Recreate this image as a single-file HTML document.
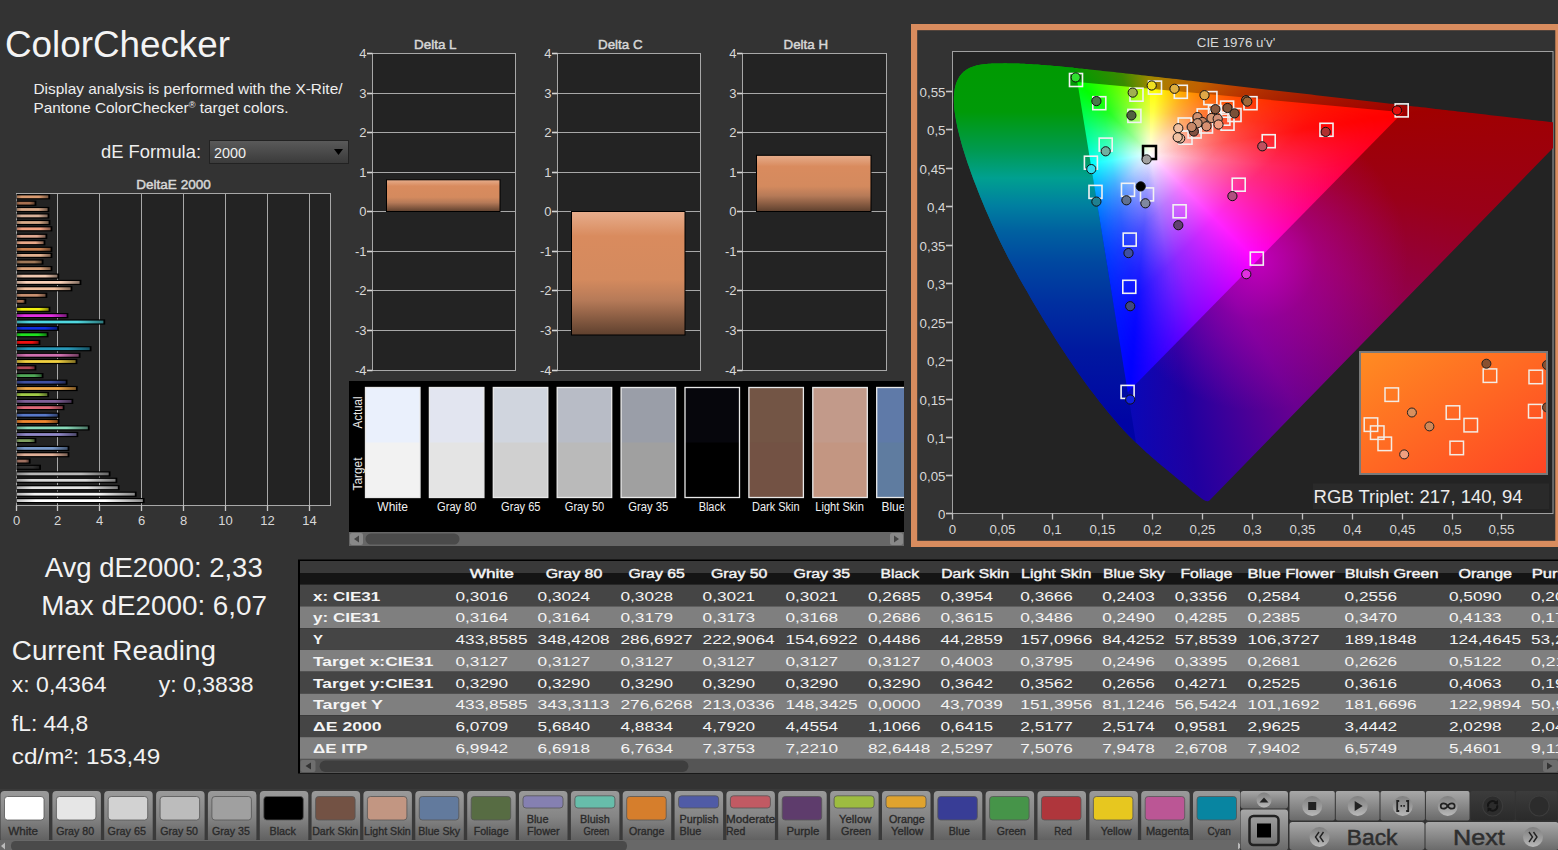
<!DOCTYPE html><html><head><meta charset="utf-8"><style>html,body{margin:0;padding:0;background:#333;}body{width:1558px;height:850px;overflow:hidden;position:relative;font-family:'Liberation Sans',sans-serif}</style></head><body><svg width="1558" height="850" viewBox="0 0 1558 850" style="position:absolute;left:0;top:0;font-family:'Liberation Sans',sans-serif">
<defs>
<linearGradient id="dd" x1="0" y1="0" x2="0" y2="1"><stop offset="0" stop-color="#5a5a5a"/><stop offset="1" stop-color="#3a3a3a"/></linearGradient>
<linearGradient id="dbar" x1="0" y1="0" x2="0" y2="1"><stop offset="0" stop-color="#e6ad8c"/><stop offset="0.2" stop-color="#d98b5e"/><stop offset="0.55" stop-color="#d48a5e"/><stop offset="0.72" stop-color="#b67a58"/><stop offset="1" stop-color="#5e402e"/></linearGradient>
</defs>
<rect x="0" y="0" width="1558" height="850" fill="#333333"/>
<text x="5" y="57" font-size="37" fill="#f4f4f4" font-weight="400" text-anchor="start" textLength="225" lengthAdjust="spacingAndGlyphs" >ColorChecker</text>
<text x="33.5" y="93.6" font-size="15" fill="#eeeeee" font-weight="400" text-anchor="start" textLength="309" lengthAdjust="spacingAndGlyphs" >Display analysis is performed with the X-Rite/</text>
<text x="33.5" y="113.2" font-size="15" fill="#eeeeee" font-weight="400" text-anchor="start" textLength="255" lengthAdjust="spacingAndGlyphs" >Pantone ColorChecker<tspan font-size="9" dy="-5">®</tspan><tspan dy="5"> target colors.</tspan></text>
<text x="101" y="158.4" font-size="18.4" fill="#eeeeee" font-weight="400" text-anchor="start" textLength="100" lengthAdjust="spacingAndGlyphs" >dE Formula:</text>
<rect x="209.5" y="140.5" width="139" height="23" fill="url(#dd)" stroke="#222" stroke-width="1"/>
<text x="214" y="158" font-size="15" fill="#f0f0f0" font-weight="400" text-anchor="start" textLength="32" lengthAdjust="spacingAndGlyphs" >2000</text>
<path d="M334 149 L343 149 L338.5 155 Z" fill="#000"/>
<text x="173.5" y="189" font-size="13" fill="#d8d8d8" font-weight="400" text-anchor="middle" textLength="74.5" lengthAdjust="spacingAndGlyphs" stroke="#d8d8d8" stroke-width="0.45">DeltaE 2000</text>
<rect x="16.5" y="193.5" width="314" height="312" fill="#232323" stroke="#a8a8a8" stroke-width="1"/>
<line x1="57.5" y1="193.5" x2="57.5" y2="505.5" stroke="#a8a8a8" stroke-width="1"/>
<line x1="99.5" y1="193.5" x2="99.5" y2="505.5" stroke="#a8a8a8" stroke-width="1"/>
<line x1="141.5" y1="193.5" x2="141.5" y2="505.5" stroke="#a8a8a8" stroke-width="1"/>
<line x1="183.5" y1="193.5" x2="183.5" y2="505.5" stroke="#a8a8a8" stroke-width="1"/>
<line x1="225.5" y1="193.5" x2="225.5" y2="505.5" stroke="#a8a8a8" stroke-width="1"/>
<line x1="267.5" y1="193.5" x2="267.5" y2="505.5" stroke="#a8a8a8" stroke-width="1"/>
<line x1="309.5" y1="193.5" x2="309.5" y2="505.5" stroke="#a8a8a8" stroke-width="1"/>
<line x1="16.5" y1="505.5" x2="16.5" y2="511" stroke="#c8c8c8" stroke-width="1.3"/>
<text x="16.5" y="525.3" font-size="13" fill="#d8d8d8" font-weight="400" text-anchor="middle" >0</text>
<line x1="57.5" y1="505.5" x2="57.5" y2="511" stroke="#c8c8c8" stroke-width="1.3"/>
<text x="57.5" y="525.3" font-size="13" fill="#d8d8d8" font-weight="400" text-anchor="middle" >2</text>
<line x1="99.5" y1="505.5" x2="99.5" y2="511" stroke="#c8c8c8" stroke-width="1.3"/>
<text x="99.5" y="525.3" font-size="13" fill="#d8d8d8" font-weight="400" text-anchor="middle" >4</text>
<line x1="141.5" y1="505.5" x2="141.5" y2="511" stroke="#c8c8c8" stroke-width="1.3"/>
<text x="141.5" y="525.3" font-size="13" fill="#d8d8d8" font-weight="400" text-anchor="middle" >6</text>
<line x1="183.5" y1="505.5" x2="183.5" y2="511" stroke="#c8c8c8" stroke-width="1.3"/>
<text x="183.5" y="525.3" font-size="13" fill="#d8d8d8" font-weight="400" text-anchor="middle" >8</text>
<line x1="225.5" y1="505.5" x2="225.5" y2="511" stroke="#c8c8c8" stroke-width="1.3"/>
<text x="225.5" y="525.3" font-size="13" fill="#d8d8d8" font-weight="400" text-anchor="middle" >10</text>
<line x1="267.5" y1="505.5" x2="267.5" y2="511" stroke="#c8c8c8" stroke-width="1.3"/>
<text x="267.5" y="525.3" font-size="13" fill="#d8d8d8" font-weight="400" text-anchor="middle" >12</text>
<line x1="309.5" y1="505.5" x2="309.5" y2="511" stroke="#c8c8c8" stroke-width="1.3"/>
<text x="309.5" y="525.3" font-size="13" fill="#d8d8d8" font-weight="400" text-anchor="middle" >14</text>
<defs><linearGradient id="b0" x1="0" y1="0" x2="1" y2="0"><stop offset="0" stop-color="#d89a70" stop-opacity="0.75"/><stop offset="0.15" stop-color="#d89a70"/><stop offset="0.7" stop-color="#d89a70"/><stop offset="1" stop-color="#d89a70" stop-opacity="0.55"/></linearGradient><linearGradient id="b1" x1="0" y1="0" x2="1" y2="0"><stop offset="0" stop-color="#a87050" stop-opacity="0.75"/><stop offset="0.15" stop-color="#a87050"/><stop offset="0.7" stop-color="#a87050"/><stop offset="1" stop-color="#a87050" stop-opacity="0.55"/></linearGradient><linearGradient id="b2" x1="0" y1="0" x2="1" y2="0"><stop offset="0" stop-color="#d8a888" stop-opacity="0.75"/><stop offset="0.15" stop-color="#d8a888"/><stop offset="0.7" stop-color="#d8a888"/><stop offset="1" stop-color="#d8a888" stop-opacity="0.55"/></linearGradient><linearGradient id="b3" x1="0" y1="0" x2="1" y2="0"><stop offset="0" stop-color="#d8b098" stop-opacity="0.75"/><stop offset="0.15" stop-color="#d8b098"/><stop offset="0.7" stop-color="#d8b098"/><stop offset="1" stop-color="#d8b098" stop-opacity="0.55"/></linearGradient><linearGradient id="b4" x1="0" y1="0" x2="1" y2="0"><stop offset="0" stop-color="#d8aa88" stop-opacity="0.75"/><stop offset="0.15" stop-color="#d8aa88"/><stop offset="0.7" stop-color="#d8aa88"/><stop offset="1" stop-color="#d8aa88" stop-opacity="0.55"/></linearGradient><linearGradient id="b5" x1="0" y1="0" x2="1" y2="0"><stop offset="0" stop-color="#f0a080" stop-opacity="0.75"/><stop offset="0.15" stop-color="#f0a080"/><stop offset="0.7" stop-color="#f0a080"/><stop offset="1" stop-color="#f0a080" stop-opacity="0.55"/></linearGradient><linearGradient id="b6" x1="0" y1="0" x2="1" y2="0"><stop offset="0" stop-color="#e0a890" stop-opacity="0.75"/><stop offset="0.15" stop-color="#e0a890"/><stop offset="0.7" stop-color="#e0a890"/><stop offset="1" stop-color="#e0a890" stop-opacity="0.55"/></linearGradient><linearGradient id="b7" x1="0" y1="0" x2="1" y2="0"><stop offset="0" stop-color="#e8a888" stop-opacity="0.75"/><stop offset="0.15" stop-color="#e8a888"/><stop offset="0.7" stop-color="#e8a888"/><stop offset="1" stop-color="#e8a888" stop-opacity="0.55"/></linearGradient><linearGradient id="b8" x1="0" y1="0" x2="1" y2="0"><stop offset="0" stop-color="#c88050" stop-opacity="0.75"/><stop offset="0.15" stop-color="#c88050"/><stop offset="0.7" stop-color="#c88050"/><stop offset="1" stop-color="#c88050" stop-opacity="0.55"/></linearGradient><linearGradient id="b9" x1="0" y1="0" x2="1" y2="0"><stop offset="0" stop-color="#e0b090" stop-opacity="0.75"/><stop offset="0.15" stop-color="#e0b090"/><stop offset="0.7" stop-color="#e0b090"/><stop offset="1" stop-color="#e0b090" stop-opacity="0.55"/></linearGradient><linearGradient id="b10" x1="0" y1="0" x2="1" y2="0"><stop offset="0" stop-color="#a07858" stop-opacity="0.75"/><stop offset="0.15" stop-color="#a07858"/><stop offset="0.7" stop-color="#a07858"/><stop offset="1" stop-color="#a07858" stop-opacity="0.55"/></linearGradient><linearGradient id="b11" x1="0" y1="0" x2="1" y2="0"><stop offset="0" stop-color="#d8a078" stop-opacity="0.75"/><stop offset="0.15" stop-color="#d8a078"/><stop offset="0.7" stop-color="#d8a078"/><stop offset="1" stop-color="#d8a078" stop-opacity="0.55"/></linearGradient><linearGradient id="b12" x1="0" y1="0" x2="1" y2="0"><stop offset="0" stop-color="#f0c8b0" stop-opacity="0.75"/><stop offset="0.15" stop-color="#f0c8b0"/><stop offset="0.7" stop-color="#f0c8b0"/><stop offset="1" stop-color="#f0c8b0" stop-opacity="0.55"/></linearGradient><linearGradient id="b13" x1="0" y1="0" x2="1" y2="0"><stop offset="0" stop-color="#f8d0b8" stop-opacity="0.75"/><stop offset="0.15" stop-color="#f8d0b8"/><stop offset="0.7" stop-color="#f8d0b8"/><stop offset="1" stop-color="#f8d0b8" stop-opacity="0.55"/></linearGradient><linearGradient id="b14" x1="0" y1="0" x2="1" y2="0"><stop offset="0" stop-color="#f0c0a0" stop-opacity="0.75"/><stop offset="0.15" stop-color="#f0c0a0"/><stop offset="0.7" stop-color="#f0c0a0"/><stop offset="1" stop-color="#f0c0a0" stop-opacity="0.55"/></linearGradient><linearGradient id="b15" x1="0" y1="0" x2="1" y2="0"><stop offset="0" stop-color="#c89070" stop-opacity="0.75"/><stop offset="0.15" stop-color="#c89070"/><stop offset="0.7" stop-color="#c89070"/><stop offset="1" stop-color="#c89070" stop-opacity="0.55"/></linearGradient><linearGradient id="b16" x1="0" y1="0" x2="1" y2="0"><stop offset="0" stop-color="#a87050" stop-opacity="0.75"/><stop offset="0.15" stop-color="#a87050"/><stop offset="0.7" stop-color="#a87050"/><stop offset="1" stop-color="#a87050" stop-opacity="0.55"/></linearGradient><linearGradient id="b17" x1="0" y1="0" x2="1" y2="0"><stop offset="0" stop-color="#f0f010" stop-opacity="0.75"/><stop offset="0.15" stop-color="#f0f010"/><stop offset="0.7" stop-color="#f0f010"/><stop offset="1" stop-color="#f0f010" stop-opacity="0.55"/></linearGradient><linearGradient id="b18" x1="0" y1="0" x2="1" y2="0"><stop offset="0" stop-color="#e030e0" stop-opacity="0.75"/><stop offset="0.15" stop-color="#e030e0"/><stop offset="0.7" stop-color="#e030e0"/><stop offset="1" stop-color="#e030e0" stop-opacity="0.55"/></linearGradient><linearGradient id="b19" x1="0" y1="0" x2="1" y2="0"><stop offset="0" stop-color="#50d8e0" stop-opacity="0.75"/><stop offset="0.15" stop-color="#50d8e0"/><stop offset="0.7" stop-color="#50d8e0"/><stop offset="1" stop-color="#50d8e0" stop-opacity="0.55"/></linearGradient><linearGradient id="b20" x1="0" y1="0" x2="1" y2="0"><stop offset="0" stop-color="#1030e0" stop-opacity="0.75"/><stop offset="0.15" stop-color="#1030e0"/><stop offset="0.7" stop-color="#1030e0"/><stop offset="1" stop-color="#1030e0" stop-opacity="0.55"/></linearGradient><linearGradient id="b21" x1="0" y1="0" x2="1" y2="0"><stop offset="0" stop-color="#20e020" stop-opacity="0.75"/><stop offset="0.15" stop-color="#20e020"/><stop offset="0.7" stop-color="#20e020"/><stop offset="1" stop-color="#20e020" stop-opacity="0.55"/></linearGradient><linearGradient id="b22" x1="0" y1="0" x2="1" y2="0"><stop offset="0" stop-color="#f01010" stop-opacity="0.75"/><stop offset="0.15" stop-color="#f01010"/><stop offset="0.7" stop-color="#f01010"/><stop offset="1" stop-color="#f01010" stop-opacity="0.55"/></linearGradient><linearGradient id="b23" x1="0" y1="0" x2="1" y2="0"><stop offset="0" stop-color="#2898b8" stop-opacity="0.75"/><stop offset="0.15" stop-color="#2898b8"/><stop offset="0.7" stop-color="#2898b8"/><stop offset="1" stop-color="#2898b8" stop-opacity="0.55"/></linearGradient><linearGradient id="b24" x1="0" y1="0" x2="1" y2="0"><stop offset="0" stop-color="#d070b0" stop-opacity="0.75"/><stop offset="0.15" stop-color="#d070b0"/><stop offset="0.7" stop-color="#d070b0"/><stop offset="1" stop-color="#d070b0" stop-opacity="0.55"/></linearGradient><linearGradient id="b25" x1="0" y1="0" x2="1" y2="0"><stop offset="0" stop-color="#f0d040" stop-opacity="0.75"/><stop offset="0.15" stop-color="#f0d040"/><stop offset="0.7" stop-color="#f0d040"/><stop offset="1" stop-color="#f0d040" stop-opacity="0.55"/></linearGradient><linearGradient id="b26" x1="0" y1="0" x2="1" y2="0"><stop offset="0" stop-color="#b04858" stop-opacity="0.75"/><stop offset="0.15" stop-color="#b04858"/><stop offset="0.7" stop-color="#b04858"/><stop offset="1" stop-color="#b04858" stop-opacity="0.55"/></linearGradient><linearGradient id="b27" x1="0" y1="0" x2="1" y2="0"><stop offset="0" stop-color="#50a858" stop-opacity="0.75"/><stop offset="0.15" stop-color="#50a858"/><stop offset="0.7" stop-color="#50a858"/><stop offset="1" stop-color="#50a858" stop-opacity="0.55"/></linearGradient><linearGradient id="b28" x1="0" y1="0" x2="1" y2="0"><stop offset="0" stop-color="#4050a0" stop-opacity="0.75"/><stop offset="0.15" stop-color="#4050a0"/><stop offset="0.7" stop-color="#4050a0"/><stop offset="1" stop-color="#4050a0" stop-opacity="0.55"/></linearGradient><linearGradient id="b29" x1="0" y1="0" x2="1" y2="0"><stop offset="0" stop-color="#f0a848" stop-opacity="0.75"/><stop offset="0.15" stop-color="#f0a848"/><stop offset="0.7" stop-color="#f0a848"/><stop offset="1" stop-color="#f0a848" stop-opacity="0.55"/></linearGradient><linearGradient id="b30" x1="0" y1="0" x2="1" y2="0"><stop offset="0" stop-color="#a0c848" stop-opacity="0.75"/><stop offset="0.15" stop-color="#a0c848"/><stop offset="0.7" stop-color="#a0c848"/><stop offset="1" stop-color="#a0c848" stop-opacity="0.55"/></linearGradient><linearGradient id="b31" x1="0" y1="0" x2="1" y2="0"><stop offset="0" stop-color="#806098" stop-opacity="0.75"/><stop offset="0.15" stop-color="#806098"/><stop offset="0.7" stop-color="#806098"/><stop offset="1" stop-color="#806098" stop-opacity="0.55"/></linearGradient><linearGradient id="b32" x1="0" y1="0" x2="1" y2="0"><stop offset="0" stop-color="#e06878" stop-opacity="0.75"/><stop offset="0.15" stop-color="#e06878"/><stop offset="0.7" stop-color="#e06878"/><stop offset="1" stop-color="#e06878" stop-opacity="0.55"/></linearGradient><linearGradient id="b33" x1="0" y1="0" x2="1" y2="0"><stop offset="0" stop-color="#5878c8" stop-opacity="0.75"/><stop offset="0.15" stop-color="#5878c8"/><stop offset="0.7" stop-color="#5878c8"/><stop offset="1" stop-color="#5878c8" stop-opacity="0.55"/></linearGradient><linearGradient id="b34" x1="0" y1="0" x2="1" y2="0"><stop offset="0" stop-color="#f08830" stop-opacity="0.75"/><stop offset="0.15" stop-color="#f08830"/><stop offset="0.7" stop-color="#f08830"/><stop offset="1" stop-color="#f08830" stop-opacity="0.55"/></linearGradient><linearGradient id="b35" x1="0" y1="0" x2="1" y2="0"><stop offset="0" stop-color="#88d8b8" stop-opacity="0.75"/><stop offset="0.15" stop-color="#88d8b8"/><stop offset="0.7" stop-color="#88d8b8"/><stop offset="1" stop-color="#88d8b8" stop-opacity="0.55"/></linearGradient><linearGradient id="b36" x1="0" y1="0" x2="1" y2="0"><stop offset="0" stop-color="#9088c8" stop-opacity="0.75"/><stop offset="0.15" stop-color="#9088c8"/><stop offset="0.7" stop-color="#9088c8"/><stop offset="1" stop-color="#9088c8" stop-opacity="0.55"/></linearGradient><linearGradient id="b37" x1="0" y1="0" x2="1" y2="0"><stop offset="0" stop-color="#80a060" stop-opacity="0.75"/><stop offset="0.15" stop-color="#80a060"/><stop offset="0.7" stop-color="#80a060"/><stop offset="1" stop-color="#80a060" stop-opacity="0.55"/></linearGradient><linearGradient id="b38" x1="0" y1="0" x2="1" y2="0"><stop offset="0" stop-color="#7898c8" stop-opacity="0.75"/><stop offset="0.15" stop-color="#7898c8"/><stop offset="0.7" stop-color="#7898c8"/><stop offset="1" stop-color="#7898c8" stop-opacity="0.55"/></linearGradient><linearGradient id="b39" x1="0" y1="0" x2="1" y2="0"><stop offset="0" stop-color="#e0b098" stop-opacity="0.75"/><stop offset="0.15" stop-color="#e0b098"/><stop offset="0.7" stop-color="#e0b098"/><stop offset="1" stop-color="#e0b098" stop-opacity="0.55"/></linearGradient><linearGradient id="b40" x1="0" y1="0" x2="1" y2="0"><stop offset="0" stop-color="#a07060" stop-opacity="0.75"/><stop offset="0.15" stop-color="#a07060"/><stop offset="0.7" stop-color="#a07060"/><stop offset="1" stop-color="#a07060" stop-opacity="0.55"/></linearGradient><linearGradient id="b41" x1="0" y1="0" x2="1" y2="0"><stop offset="0" stop-color="#303030" stop-opacity="0.75"/><stop offset="0.15" stop-color="#303030"/><stop offset="0.7" stop-color="#303030"/><stop offset="1" stop-color="#303030" stop-opacity="0.55"/></linearGradient><linearGradient id="b42" x1="0" y1="0" x2="1" y2="0"><stop offset="0" stop-color="#b8b8b8" stop-opacity="0.75"/><stop offset="0.15" stop-color="#b8b8b8"/><stop offset="0.7" stop-color="#b8b8b8"/><stop offset="1" stop-color="#b8b8b8" stop-opacity="0.55"/></linearGradient><linearGradient id="b43" x1="0" y1="0" x2="1" y2="0"><stop offset="0" stop-color="#d8d8d8" stop-opacity="0.75"/><stop offset="0.15" stop-color="#d8d8d8"/><stop offset="0.7" stop-color="#d8d8d8"/><stop offset="1" stop-color="#d8d8d8" stop-opacity="0.55"/></linearGradient><linearGradient id="b44" x1="0" y1="0" x2="1" y2="0"><stop offset="0" stop-color="#e4e4e4" stop-opacity="0.75"/><stop offset="0.15" stop-color="#e4e4e4"/><stop offset="0.7" stop-color="#e4e4e4"/><stop offset="1" stop-color="#e4e4e4" stop-opacity="0.55"/></linearGradient><linearGradient id="b45" x1="0" y1="0" x2="1" y2="0"><stop offset="0" stop-color="#f4f4f4" stop-opacity="0.75"/><stop offset="0.15" stop-color="#f4f4f4"/><stop offset="0.7" stop-color="#f4f4f4"/><stop offset="1" stop-color="#f4f4f4" stop-opacity="0.55"/></linearGradient><linearGradient id="b46" x1="0" y1="0" x2="1" y2="0"><stop offset="0" stop-color="#ffffff" stop-opacity="0.75"/><stop offset="0.15" stop-color="#ffffff"/><stop offset="0.7" stop-color="#ffffff"/><stop offset="1" stop-color="#ffffff" stop-opacity="0.55"/></linearGradient></defs>
<rect x="16.5" y="194.2" width="33.6" height="5.2" fill="#000"/>
<rect x="17" y="195.4" width="31.3" height="2.8" fill="url(#b0)"/>
<rect x="16.5" y="200.6" width="19.9" height="5.2" fill="#000"/>
<rect x="17" y="201.8" width="17.6" height="2.8" fill="url(#b1)"/>
<rect x="16.5" y="206.9" width="32.9" height="5.2" fill="#000"/>
<rect x="17" y="208.1" width="30.6" height="2.8" fill="url(#b2)"/>
<rect x="16.5" y="213.3" width="32.9" height="5.2" fill="#000"/>
<rect x="17" y="214.5" width="30.6" height="2.8" fill="url(#b3)"/>
<rect x="16.5" y="219.9" width="33.9" height="5.2" fill="#000"/>
<rect x="17" y="221.1" width="31.6" height="2.8" fill="url(#b4)"/>
<rect x="16.5" y="226.2" width="35.9" height="5.2" fill="#000"/>
<rect x="17" y="227.4" width="33.6" height="2.8" fill="url(#b5)"/>
<rect x="16.5" y="233.7" width="30.8" height="5.2" fill="#000"/>
<rect x="17" y="234.9" width="28.5" height="2.8" fill="url(#b6)"/>
<rect x="16.5" y="240.1" width="28.9" height="5.2" fill="#000"/>
<rect x="17" y="241.3" width="26.6" height="2.8" fill="url(#b7)"/>
<rect x="16.5" y="246.7" width="35.9" height="5.2" fill="#000"/>
<rect x="17" y="247.9" width="33.6" height="2.8" fill="url(#b8)"/>
<rect x="16.5" y="252.8" width="35.9" height="5.2" fill="#000"/>
<rect x="17" y="254.0" width="33.6" height="2.8" fill="url(#b9)"/>
<rect x="16.5" y="259.4" width="27.0" height="5.2" fill="#000"/>
<rect x="17" y="260.6" width="24.7" height="2.8" fill="url(#b10)"/>
<rect x="16.5" y="266.0" width="35.9" height="5.2" fill="#000"/>
<rect x="17" y="267.2" width="33.6" height="2.8" fill="url(#b11)"/>
<rect x="16.5" y="273.5" width="42.7" height="5.2" fill="#000"/>
<rect x="17" y="274.7" width="40.4" height="2.8" fill="url(#b12)"/>
<rect x="16.5" y="279.8" width="64.9" height="5.2" fill="#000"/>
<rect x="17" y="281.0" width="62.6" height="2.8" fill="url(#b13)"/>
<rect x="16.5" y="286.1" width="55.9" height="5.2" fill="#000"/>
<rect x="17" y="287.3" width="53.6" height="2.8" fill="url(#b14)"/>
<rect x="16.5" y="292.7" width="30.8" height="5.2" fill="#000"/>
<rect x="17" y="293.9" width="28.5" height="2.8" fill="url(#b15)"/>
<rect x="16.5" y="298.7" width="9.8" height="5.2" fill="#000"/>
<rect x="17" y="299.9" width="7.5" height="2.8" fill="url(#b16)"/>
<rect x="16.5" y="306.7" width="33.9" height="5.2" fill="#000"/>
<rect x="17" y="307.9" width="31.6" height="2.8" fill="url(#b17)"/>
<rect x="16.5" y="313.0" width="51.9" height="5.2" fill="#000"/>
<rect x="17" y="314.2" width="49.6" height="2.8" fill="url(#b18)"/>
<rect x="16.5" y="319.4" width="88.7" height="5.2" fill="#000"/>
<rect x="17" y="320.6" width="86.4" height="2.8" fill="url(#b19)"/>
<rect x="16.5" y="325.7" width="42.5" height="5.2" fill="#000"/>
<rect x="17" y="326.9" width="40.2" height="2.8" fill="url(#b20)"/>
<rect x="16.5" y="332.1" width="32.0" height="5.2" fill="#000"/>
<rect x="17" y="333.3" width="29.7" height="2.8" fill="url(#b21)"/>
<rect x="16.5" y="339.8" width="23.9" height="5.2" fill="#000"/>
<rect x="17" y="341.0" width="21.6" height="2.8" fill="url(#b22)"/>
<rect x="16.5" y="346.1" width="75.0" height="5.2" fill="#000"/>
<rect x="17" y="347.3" width="72.7" height="2.8" fill="url(#b23)"/>
<rect x="16.5" y="352.7" width="64.0" height="5.2" fill="#000"/>
<rect x="17" y="353.9" width="61.7" height="2.8" fill="url(#b24)"/>
<rect x="16.5" y="358.9" width="60.9" height="5.2" fill="#000"/>
<rect x="17" y="360.1" width="58.6" height="2.8" fill="url(#b25)"/>
<rect x="16.5" y="365.2" width="19.9" height="5.2" fill="#000"/>
<rect x="17" y="366.4" width="17.6" height="2.8" fill="url(#b26)"/>
<rect x="16.5" y="373.0" width="27.0" height="5.2" fill="#000"/>
<rect x="17" y="374.2" width="24.7" height="2.8" fill="url(#b27)"/>
<rect x="16.5" y="379.6" width="51.0" height="5.2" fill="#000"/>
<rect x="17" y="380.8" width="48.7" height="2.8" fill="url(#b28)"/>
<rect x="16.5" y="385.9" width="61.2" height="5.2" fill="#000"/>
<rect x="17" y="387.1" width="58.9" height="2.8" fill="url(#b29)"/>
<rect x="16.5" y="392.0" width="32.6" height="5.2" fill="#000"/>
<rect x="17" y="393.2" width="30.3" height="2.8" fill="url(#b30)"/>
<rect x="16.5" y="398.8" width="56.8" height="5.2" fill="#000"/>
<rect x="17" y="400.0" width="54.5" height="2.8" fill="url(#b31)"/>
<rect x="16.5" y="405.0" width="48.0" height="5.2" fill="#000"/>
<rect x="17" y="406.2" width="45.7" height="2.8" fill="url(#b32)"/>
<rect x="16.5" y="412.6" width="43.0" height="5.2" fill="#000"/>
<rect x="17" y="413.8" width="40.7" height="2.8" fill="url(#b33)"/>
<rect x="16.5" y="418.9" width="43.0" height="5.2" fill="#000"/>
<rect x="17" y="420.1" width="40.7" height="2.8" fill="url(#b34)"/>
<rect x="16.5" y="425.3" width="73.1" height="5.2" fill="#000"/>
<rect x="17" y="426.5" width="70.8" height="2.8" fill="url(#b35)"/>
<rect x="16.5" y="431.9" width="61.8" height="5.2" fill="#000"/>
<rect x="17" y="433.1" width="59.5" height="2.8" fill="url(#b36)"/>
<rect x="16.5" y="438.0" width="19.9" height="5.2" fill="#000"/>
<rect x="17" y="439.2" width="17.6" height="2.8" fill="url(#b37)"/>
<rect x="16.5" y="445.8" width="52.9" height="5.2" fill="#000"/>
<rect x="17" y="447.0" width="50.6" height="2.8" fill="url(#b38)"/>
<rect x="16.5" y="452.1" width="52.9" height="5.2" fill="#000"/>
<rect x="17" y="453.3" width="50.6" height="2.8" fill="url(#b39)"/>
<rect x="16.5" y="458.5" width="14.1" height="5.2" fill="#000"/>
<rect x="17" y="459.7" width="11.8" height="2.8" fill="url(#b40)"/>
<rect x="16.5" y="464.7" width="24.5" height="5.2" fill="#000"/>
<rect x="17" y="465.9" width="22.2" height="2.8" fill="url(#b41)"/>
<rect x="16.5" y="471.3" width="94.0" height="5.2" fill="#000"/>
<rect x="17" y="472.5" width="91.7" height="2.8" fill="url(#b42)"/>
<rect x="16.5" y="477.7" width="100.8" height="5.2" fill="#000"/>
<rect x="17" y="478.9" width="98.5" height="2.8" fill="url(#b43)"/>
<rect x="16.5" y="485.1" width="103.1" height="5.2" fill="#000"/>
<rect x="17" y="486.3" width="100.8" height="2.8" fill="url(#b44)"/>
<rect x="16.5" y="491.6" width="120.1" height="5.2" fill="#000"/>
<rect x="17" y="492.8" width="117.8" height="2.8" fill="url(#b45)"/>
<rect x="16.5" y="498.0" width="128.1" height="5.2" fill="#000"/>
<rect x="17" y="499.2" width="125.8" height="2.8" fill="url(#b46)"/>
<text x="435.3" y="49" font-size="13" fill="#d8d8d8" font-weight="400" text-anchor="middle" textLength="42.6" lengthAdjust="spacingAndGlyphs" stroke="#d8d8d8" stroke-width="0.45">Delta L</text>
<rect x="372.5" y="53.5" width="143.0" height="317" fill="#232323" stroke="#a8a8a8" stroke-width="1"/>
<line x1="372.5" y1="53.5" x2="515.5" y2="53.5" stroke="#a8a8a8" stroke-width="1"/>
<line x1="367.0" y1="53.5" x2="372.5" y2="53.5" stroke="#d8d8d8" stroke-width="1.6"/>
<text x="366.5" y="58.1" font-size="13" fill="#d8d8d8" font-weight="400" text-anchor="end" >4</text>
<line x1="372.5" y1="93.5" x2="515.5" y2="93.5" stroke="#a8a8a8" stroke-width="1"/>
<line x1="367.0" y1="93.5" x2="372.5" y2="93.5" stroke="#d8d8d8" stroke-width="1.6"/>
<text x="366.5" y="98.1" font-size="13" fill="#d8d8d8" font-weight="400" text-anchor="end" >3</text>
<line x1="372.5" y1="132.5" x2="515.5" y2="132.5" stroke="#a8a8a8" stroke-width="1"/>
<line x1="367.0" y1="132.5" x2="372.5" y2="132.5" stroke="#d8d8d8" stroke-width="1.6"/>
<text x="366.5" y="137.1" font-size="13" fill="#d8d8d8" font-weight="400" text-anchor="end" >2</text>
<line x1="372.5" y1="172.5" x2="515.5" y2="172.5" stroke="#a8a8a8" stroke-width="1"/>
<line x1="367.0" y1="172.5" x2="372.5" y2="172.5" stroke="#d8d8d8" stroke-width="1.6"/>
<text x="366.5" y="177.1" font-size="13" fill="#d8d8d8" font-weight="400" text-anchor="end" >1</text>
<line x1="372.5" y1="211.5" x2="515.5" y2="211.5" stroke="#a8a8a8" stroke-width="1"/>
<line x1="367.0" y1="211.5" x2="372.5" y2="211.5" stroke="#d8d8d8" stroke-width="1.6"/>
<text x="366.5" y="216.1" font-size="13" fill="#d8d8d8" font-weight="400" text-anchor="end" >0</text>
<line x1="372.5" y1="251.5" x2="515.5" y2="251.5" stroke="#a8a8a8" stroke-width="1"/>
<line x1="367.0" y1="251.5" x2="372.5" y2="251.5" stroke="#d8d8d8" stroke-width="1.6"/>
<text x="366.5" y="256.1" font-size="13" fill="#d8d8d8" font-weight="400" text-anchor="end" >-1</text>
<line x1="372.5" y1="290.5" x2="515.5" y2="290.5" stroke="#a8a8a8" stroke-width="1"/>
<line x1="367.0" y1="290.5" x2="372.5" y2="290.5" stroke="#d8d8d8" stroke-width="1.6"/>
<text x="366.5" y="295.1" font-size="13" fill="#d8d8d8" font-weight="400" text-anchor="end" >-2</text>
<line x1="372.5" y1="330.5" x2="515.5" y2="330.5" stroke="#a8a8a8" stroke-width="1"/>
<line x1="367.0" y1="330.5" x2="372.5" y2="330.5" stroke="#d8d8d8" stroke-width="1.6"/>
<text x="366.5" y="335.1" font-size="13" fill="#d8d8d8" font-weight="400" text-anchor="end" >-3</text>
<line x1="372.5" y1="370.5" x2="515.5" y2="370.5" stroke="#a8a8a8" stroke-width="1"/>
<line x1="367.0" y1="370.5" x2="372.5" y2="370.5" stroke="#d8d8d8" stroke-width="1.6"/>
<text x="366.5" y="375.1" font-size="13" fill="#d8d8d8" font-weight="400" text-anchor="end" >-4</text>
<rect x="386.5" y="179.8" width="113.5" height="31.7" fill="url(#dbar)" stroke="#000" stroke-width="1"/>
<text x="620.3" y="49" font-size="13" fill="#d8d8d8" font-weight="400" text-anchor="middle" textLength="44.5" lengthAdjust="spacingAndGlyphs" stroke="#d8d8d8" stroke-width="0.45">Delta C</text>
<rect x="557.5" y="53.5" width="143.0" height="317" fill="#232323" stroke="#a8a8a8" stroke-width="1"/>
<line x1="557.5" y1="53.5" x2="700.5" y2="53.5" stroke="#a8a8a8" stroke-width="1"/>
<line x1="552.0" y1="53.5" x2="557.5" y2="53.5" stroke="#d8d8d8" stroke-width="1.6"/>
<text x="551.5" y="58.1" font-size="13" fill="#d8d8d8" font-weight="400" text-anchor="end" >4</text>
<line x1="557.5" y1="93.5" x2="700.5" y2="93.5" stroke="#a8a8a8" stroke-width="1"/>
<line x1="552.0" y1="93.5" x2="557.5" y2="93.5" stroke="#d8d8d8" stroke-width="1.6"/>
<text x="551.5" y="98.1" font-size="13" fill="#d8d8d8" font-weight="400" text-anchor="end" >3</text>
<line x1="557.5" y1="132.5" x2="700.5" y2="132.5" stroke="#a8a8a8" stroke-width="1"/>
<line x1="552.0" y1="132.5" x2="557.5" y2="132.5" stroke="#d8d8d8" stroke-width="1.6"/>
<text x="551.5" y="137.1" font-size="13" fill="#d8d8d8" font-weight="400" text-anchor="end" >2</text>
<line x1="557.5" y1="172.5" x2="700.5" y2="172.5" stroke="#a8a8a8" stroke-width="1"/>
<line x1="552.0" y1="172.5" x2="557.5" y2="172.5" stroke="#d8d8d8" stroke-width="1.6"/>
<text x="551.5" y="177.1" font-size="13" fill="#d8d8d8" font-weight="400" text-anchor="end" >1</text>
<line x1="557.5" y1="211.5" x2="700.5" y2="211.5" stroke="#a8a8a8" stroke-width="1"/>
<line x1="552.0" y1="211.5" x2="557.5" y2="211.5" stroke="#d8d8d8" stroke-width="1.6"/>
<text x="551.5" y="216.1" font-size="13" fill="#d8d8d8" font-weight="400" text-anchor="end" >0</text>
<line x1="557.5" y1="251.5" x2="700.5" y2="251.5" stroke="#a8a8a8" stroke-width="1"/>
<line x1="552.0" y1="251.5" x2="557.5" y2="251.5" stroke="#d8d8d8" stroke-width="1.6"/>
<text x="551.5" y="256.1" font-size="13" fill="#d8d8d8" font-weight="400" text-anchor="end" >-1</text>
<line x1="557.5" y1="290.5" x2="700.5" y2="290.5" stroke="#a8a8a8" stroke-width="1"/>
<line x1="552.0" y1="290.5" x2="557.5" y2="290.5" stroke="#d8d8d8" stroke-width="1.6"/>
<text x="551.5" y="295.1" font-size="13" fill="#d8d8d8" font-weight="400" text-anchor="end" >-2</text>
<line x1="557.5" y1="330.5" x2="700.5" y2="330.5" stroke="#a8a8a8" stroke-width="1"/>
<line x1="552.0" y1="330.5" x2="557.5" y2="330.5" stroke="#d8d8d8" stroke-width="1.6"/>
<text x="551.5" y="335.1" font-size="13" fill="#d8d8d8" font-weight="400" text-anchor="end" >-3</text>
<line x1="557.5" y1="370.5" x2="700.5" y2="370.5" stroke="#a8a8a8" stroke-width="1"/>
<line x1="552.0" y1="370.5" x2="557.5" y2="370.5" stroke="#d8d8d8" stroke-width="1.6"/>
<text x="551.5" y="375.1" font-size="13" fill="#d8d8d8" font-weight="400" text-anchor="end" >-4</text>
<rect x="571.5" y="211.5" width="113.5" height="123.5" fill="url(#dbar)" stroke="#000" stroke-width="1"/>
<text x="805.8" y="49" font-size="13" fill="#d8d8d8" font-weight="400" text-anchor="middle" textLength="44.5" lengthAdjust="spacingAndGlyphs" stroke="#d8d8d8" stroke-width="0.45">Delta H</text>
<rect x="742.5" y="53.5" width="144.0" height="317" fill="#232323" stroke="#a8a8a8" stroke-width="1"/>
<line x1="742.5" y1="53.5" x2="886.5" y2="53.5" stroke="#a8a8a8" stroke-width="1"/>
<line x1="737.0" y1="53.5" x2="742.5" y2="53.5" stroke="#d8d8d8" stroke-width="1.6"/>
<text x="736.5" y="58.1" font-size="13" fill="#d8d8d8" font-weight="400" text-anchor="end" >4</text>
<line x1="742.5" y1="93.5" x2="886.5" y2="93.5" stroke="#a8a8a8" stroke-width="1"/>
<line x1="737.0" y1="93.5" x2="742.5" y2="93.5" stroke="#d8d8d8" stroke-width="1.6"/>
<text x="736.5" y="98.1" font-size="13" fill="#d8d8d8" font-weight="400" text-anchor="end" >3</text>
<line x1="742.5" y1="132.5" x2="886.5" y2="132.5" stroke="#a8a8a8" stroke-width="1"/>
<line x1="737.0" y1="132.5" x2="742.5" y2="132.5" stroke="#d8d8d8" stroke-width="1.6"/>
<text x="736.5" y="137.1" font-size="13" fill="#d8d8d8" font-weight="400" text-anchor="end" >2</text>
<line x1="742.5" y1="172.5" x2="886.5" y2="172.5" stroke="#a8a8a8" stroke-width="1"/>
<line x1="737.0" y1="172.5" x2="742.5" y2="172.5" stroke="#d8d8d8" stroke-width="1.6"/>
<text x="736.5" y="177.1" font-size="13" fill="#d8d8d8" font-weight="400" text-anchor="end" >1</text>
<line x1="742.5" y1="211.5" x2="886.5" y2="211.5" stroke="#a8a8a8" stroke-width="1"/>
<line x1="737.0" y1="211.5" x2="742.5" y2="211.5" stroke="#d8d8d8" stroke-width="1.6"/>
<text x="736.5" y="216.1" font-size="13" fill="#d8d8d8" font-weight="400" text-anchor="end" >0</text>
<line x1="742.5" y1="251.5" x2="886.5" y2="251.5" stroke="#a8a8a8" stroke-width="1"/>
<line x1="737.0" y1="251.5" x2="742.5" y2="251.5" stroke="#d8d8d8" stroke-width="1.6"/>
<text x="736.5" y="256.1" font-size="13" fill="#d8d8d8" font-weight="400" text-anchor="end" >-1</text>
<line x1="742.5" y1="290.5" x2="886.5" y2="290.5" stroke="#a8a8a8" stroke-width="1"/>
<line x1="737.0" y1="290.5" x2="742.5" y2="290.5" stroke="#d8d8d8" stroke-width="1.6"/>
<text x="736.5" y="295.1" font-size="13" fill="#d8d8d8" font-weight="400" text-anchor="end" >-2</text>
<line x1="742.5" y1="330.5" x2="886.5" y2="330.5" stroke="#a8a8a8" stroke-width="1"/>
<line x1="737.0" y1="330.5" x2="742.5" y2="330.5" stroke="#d8d8d8" stroke-width="1.6"/>
<text x="736.5" y="335.1" font-size="13" fill="#d8d8d8" font-weight="400" text-anchor="end" >-3</text>
<line x1="742.5" y1="370.5" x2="886.5" y2="370.5" stroke="#a8a8a8" stroke-width="1"/>
<line x1="737.0" y1="370.5" x2="742.5" y2="370.5" stroke="#d8d8d8" stroke-width="1.6"/>
<text x="736.5" y="375.1" font-size="13" fill="#d8d8d8" font-weight="400" text-anchor="end" >-4</text>
<rect x="756.5" y="155.3" width="114.5" height="56.2" fill="url(#dbar)" stroke="#000" stroke-width="1"/>
<rect x="349" y="381" width="555" height="151" fill="#000"/>
<text x="0" y="0" font-size="12" fill="#e8e8e8" transform="translate(362,428.5) rotate(-90)" textLength="32" lengthAdjust="spacingAndGlyphs">Actual</text>
<text x="0" y="0" font-size="12" fill="#e8e8e8" transform="translate(362,490.5) rotate(-90)" textLength="33" lengthAdjust="spacingAndGlyphs">Target</text>
<svg x="349" y="381" width="555" height="151" overflow="hidden">
<rect x="16.5" y="6.5" width="54.5" height="110" fill="#f2f2f2"/>
<rect x="16.5" y="6.5" width="54.5" height="55" fill="#eaf0fc"/>
<rect x="16.5" y="6.5" width="54.5" height="110" fill="none" stroke="#e8e8e8" stroke-width="1.3"/>
<text x="43.7" y="129.60000000000002" font-size="12" fill="#f0f0f0" text-anchor="middle" textLength="30.7" lengthAdjust="spacingAndGlyphs">White</text>
<rect x="80.4" y="6.5" width="54.5" height="110" fill="#e4e4e4"/>
<rect x="80.4" y="6.5" width="54.5" height="55" fill="#e2e5f0"/>
<rect x="80.4" y="6.5" width="54.5" height="110" fill="none" stroke="#e8e8e8" stroke-width="1.3"/>
<text x="107.8" y="129.60000000000002" font-size="12" fill="#f0f0f0" text-anchor="middle" textLength="39.5" lengthAdjust="spacingAndGlyphs">Gray 80</text>
<rect x="144.3" y="6.5" width="54.5" height="110" fill="#d0d0d0"/>
<rect x="144.3" y="6.5" width="54.5" height="55" fill="#d0d5de"/>
<rect x="144.3" y="6.5" width="54.5" height="110" fill="none" stroke="#e8e8e8" stroke-width="1.3"/>
<text x="171.8" y="129.60000000000002" font-size="12" fill="#f0f0f0" text-anchor="middle" textLength="39.5" lengthAdjust="spacingAndGlyphs">Gray 65</text>
<rect x="208.2" y="6.5" width="54.5" height="110" fill="#bababa"/>
<rect x="208.2" y="6.5" width="54.5" height="55" fill="#b8bcc6"/>
<rect x="208.2" y="6.5" width="54.5" height="110" fill="none" stroke="#e8e8e8" stroke-width="1.3"/>
<text x="235.5" y="129.60000000000002" font-size="12" fill="#f0f0f0" text-anchor="middle" textLength="39.5" lengthAdjust="spacingAndGlyphs">Gray 50</text>
<rect x="272.1" y="6.5" width="54.5" height="110" fill="#a0a0a0"/>
<rect x="272.1" y="6.5" width="54.5" height="55" fill="#9a9ea8"/>
<rect x="272.1" y="6.5" width="54.5" height="110" fill="none" stroke="#e8e8e8" stroke-width="1.3"/>
<text x="299.2" y="129.60000000000002" font-size="12" fill="#f0f0f0" text-anchor="middle" textLength="39.9" lengthAdjust="spacingAndGlyphs">Gray 35</text>
<rect x="336.0" y="6.5" width="54.5" height="110" fill="#000000"/>
<rect x="336.0" y="6.5" width="54.5" height="55" fill="#06060c"/>
<rect x="336.0" y="6.5" width="54.5" height="110" fill="none" stroke="#e8e8e8" stroke-width="1.3"/>
<text x="363.0" y="129.60000000000002" font-size="12" fill="#f0f0f0" text-anchor="middle" textLength="26.7" lengthAdjust="spacingAndGlyphs">Black</text>
<rect x="399.9" y="6.5" width="54.5" height="110" fill="#735244"/>
<rect x="399.9" y="6.5" width="54.5" height="55" fill="#735545"/>
<rect x="399.9" y="6.5" width="54.5" height="110" fill="none" stroke="#e8e8e8" stroke-width="1.3"/>
<text x="426.8" y="129.60000000000002" font-size="12" fill="#f0f0f0" text-anchor="middle" textLength="47.6" lengthAdjust="spacingAndGlyphs">Dark Skin</text>
<rect x="463.8" y="6.5" width="54.5" height="110" fill="#c39682"/>
<rect x="463.8" y="6.5" width="54.5" height="55" fill="#c29a8a"/>
<rect x="463.8" y="6.5" width="54.5" height="110" fill="none" stroke="#e8e8e8" stroke-width="1.3"/>
<text x="490.6" y="129.60000000000002" font-size="12" fill="#f0f0f0" text-anchor="middle" textLength="48.7" lengthAdjust="spacingAndGlyphs">Light Skin</text>
<rect x="527.7" y="6.5" width="54.5" height="110" fill="#5f7ca0"/>
<rect x="527.7" y="6.5" width="54.5" height="55" fill="#5f7aa8"/>
<rect x="527.7" y="6.5" width="54.5" height="110" fill="none" stroke="#e8e8e8" stroke-width="1.3"/>
<text x="556.0" y="129.60000000000002" font-size="12" fill="#f0f0f0" text-anchor="middle" textLength="47.0" lengthAdjust="spacingAndGlyphs">Blue Sky</text>
</svg>
<rect x="349" y="532" width="555" height="14" fill="#666"/>
<rect x="350" y="533" width="13" height="12" rx="2" fill="#888"/><path d="M359 535.5 L359 542.5 L354 539 Z" fill="#444"/>
<rect x="365.5" y="533.5" width="94" height="11" rx="5.5" fill="#4a4a4a"/>
<rect x="890" y="533" width="13" height="12" rx="2" fill="#888"/><path d="M894 535.5 L894 542.5 L899 539 Z" fill="#444"/>
<text x="44.7" y="576.8" font-size="27" fill="#f2f2f2" font-weight="400" text-anchor="start" textLength="218" lengthAdjust="spacingAndGlyphs" >Avg dE2000: 2,33</text>
<text x="41.2" y="615" font-size="27" fill="#f2f2f2" font-weight="400" text-anchor="start" textLength="225.8" lengthAdjust="spacingAndGlyphs" >Max dE2000: 6,07</text>
<text x="11.8" y="660" font-size="27" fill="#f2f2f2" font-weight="400" text-anchor="start" textLength="204.2" lengthAdjust="spacingAndGlyphs" >Current Reading</text>
<text x="11.8" y="692.4" font-size="22.5" fill="#f2f2f2" font-weight="400" text-anchor="start" textLength="94.7" lengthAdjust="spacingAndGlyphs" >x: 0,4364</text>
<text x="158.8" y="692.4" font-size="22.5" fill="#f2f2f2" font-weight="400" text-anchor="start" textLength="94.7" lengthAdjust="spacingAndGlyphs" >y: 0,3838</text>
<text x="11.8" y="731.2" font-size="22.5" fill="#f2f2f2" font-weight="400" text-anchor="start" textLength="76.4" lengthAdjust="spacingAndGlyphs" >fL: 44,8</text>
<text x="11.8" y="763.5" font-size="22.5" fill="#f2f2f2" font-weight="400" text-anchor="start" textLength="148.5" lengthAdjust="spacingAndGlyphs" >cd/m²: 153,49</text>
<rect x="298" y="559.5" width="1262" height="214" fill="#000"/>
<rect x="300" y="561" width="1260" height="12" fill="#393939"/>
<rect x="300" y="573" width="1260" height="11.5" fill="#141414"/>
<text x="469.8" y="577.9" font-size="12.5" fill="#f4f4f4" font-weight="400" text-anchor="start" textLength="44" lengthAdjust="spacingAndGlyphs" stroke="#f4f4f4" stroke-width="0.4">White</text>
<text x="545.7" y="577.9" font-size="12.5" fill="#f4f4f4" font-weight="400" text-anchor="start" textLength="56.6" lengthAdjust="spacingAndGlyphs" stroke="#f4f4f4" stroke-width="0.4">Gray 80</text>
<text x="628.5" y="577.9" font-size="12.5" fill="#f4f4f4" font-weight="400" text-anchor="start" textLength="56.3" lengthAdjust="spacingAndGlyphs" stroke="#f4f4f4" stroke-width="0.4">Gray 65</text>
<text x="711" y="577.9" font-size="12.5" fill="#f4f4f4" font-weight="400" text-anchor="start" textLength="56.4" lengthAdjust="spacingAndGlyphs" stroke="#f4f4f4" stroke-width="0.4">Gray 50</text>
<text x="793.6" y="577.9" font-size="12.5" fill="#f4f4f4" font-weight="400" text-anchor="start" textLength="56.6" lengthAdjust="spacingAndGlyphs" stroke="#f4f4f4" stroke-width="0.4">Gray 35</text>
<text x="880.6" y="577.9" font-size="12.5" fill="#f4f4f4" font-weight="400" text-anchor="start" textLength="38.4" lengthAdjust="spacingAndGlyphs" stroke="#f4f4f4" stroke-width="0.4">Black</text>
<text x="941.3" y="577.9" font-size="12.5" fill="#f4f4f4" font-weight="400" text-anchor="start" textLength="68" lengthAdjust="spacingAndGlyphs" stroke="#f4f4f4" stroke-width="0.4">Dark Skin</text>
<text x="1021.1" y="577.9" font-size="12.5" fill="#f4f4f4" font-weight="400" text-anchor="start" textLength="70.2" lengthAdjust="spacingAndGlyphs" stroke="#f4f4f4" stroke-width="0.4">Light Skin</text>
<text x="1103" y="577.9" font-size="12.5" fill="#f4f4f4" font-weight="400" text-anchor="start" textLength="61.8" lengthAdjust="spacingAndGlyphs" stroke="#f4f4f4" stroke-width="0.4">Blue Sky</text>
<text x="1180.4" y="577.9" font-size="12.5" fill="#f4f4f4" font-weight="400" text-anchor="start" textLength="52" lengthAdjust="spacingAndGlyphs" stroke="#f4f4f4" stroke-width="0.4">Foliage</text>
<text x="1247.6" y="577.9" font-size="12.5" fill="#f4f4f4" font-weight="400" text-anchor="start" textLength="87.1" lengthAdjust="spacingAndGlyphs" stroke="#f4f4f4" stroke-width="0.4">Blue Flower</text>
<text x="1344.8" y="577.9" font-size="12.5" fill="#f4f4f4" font-weight="400" text-anchor="start" textLength="93.7" lengthAdjust="spacingAndGlyphs" stroke="#f4f4f4" stroke-width="0.4">Bluish Green</text>
<text x="1458.5" y="577.9" font-size="12.5" fill="#f4f4f4" font-weight="400" text-anchor="start" textLength="53.5" lengthAdjust="spacingAndGlyphs" stroke="#f4f4f4" stroke-width="0.4">Orange</text>
<text x="1531.7" y="577.9" font-size="12.5" fill="#f4f4f4" font-weight="400" text-anchor="start" textLength="48" lengthAdjust="spacingAndGlyphs" stroke="#f4f4f4" stroke-width="0.4">Purple</text>
<rect x="300" y="584.5" width="1260" height="21.8" fill="#454545"/>
<rect x="300" y="606.3" width="1260" height="21.8" fill="#7f7f7f"/>
<rect x="300" y="628.1" width="1260" height="21.8" fill="#454545"/>
<rect x="300" y="649.9" width="1260" height="21.8" fill="#7f7f7f"/>
<rect x="300" y="671.7" width="1260" height="21.8" fill="#454545"/>
<rect x="300" y="693.5" width="1260" height="21.8" fill="#7f7f7f"/>
<rect x="300" y="715.3" width="1260" height="21.8" fill="#454545"/>
<rect x="300" y="737.1" width="1260" height="21.8" fill="#7f7f7f"/>
<text x="313" y="600.6" font-size="13.7" fill="#f4f4f4" font-weight="700" text-anchor="start" textLength="67.3" lengthAdjust="spacingAndGlyphs" >x: CIE31</text>
<text x="455.5" y="600.6" font-size="13.5" fill="#f4f4f4" font-weight="400" text-anchor="start" textLength="52.6" lengthAdjust="spacingAndGlyphs" >0,3016</text>
<text x="537.6" y="600.6" font-size="13.5" fill="#f4f4f4" font-weight="400" text-anchor="start" textLength="52.6" lengthAdjust="spacingAndGlyphs" >0,3024</text>
<text x="620.5" y="600.6" font-size="13.5" fill="#f4f4f4" font-weight="400" text-anchor="start" textLength="52.6" lengthAdjust="spacingAndGlyphs" >0,3028</text>
<text x="702.6" y="600.6" font-size="13.5" fill="#f4f4f4" font-weight="400" text-anchor="start" textLength="52.6" lengthAdjust="spacingAndGlyphs" >0,3021</text>
<text x="785.5" y="600.6" font-size="13.5" fill="#f4f4f4" font-weight="400" text-anchor="start" textLength="52.6" lengthAdjust="spacingAndGlyphs" >0,3021</text>
<text x="868" y="600.6" font-size="13.5" fill="#f4f4f4" font-weight="400" text-anchor="start" textLength="52.6" lengthAdjust="spacingAndGlyphs" >0,2685</text>
<text x="940.5" y="600.6" font-size="13.5" fill="#f4f4f4" font-weight="400" text-anchor="start" textLength="52.6" lengthAdjust="spacingAndGlyphs" >0,3954</text>
<text x="1020.3" y="600.6" font-size="13.5" fill="#f4f4f4" font-weight="400" text-anchor="start" textLength="52.6" lengthAdjust="spacingAndGlyphs" >0,3666</text>
<text x="1102.2" y="600.6" font-size="13.5" fill="#f4f4f4" font-weight="400" text-anchor="start" textLength="52.6" lengthAdjust="spacingAndGlyphs" >0,2403</text>
<text x="1174.7" y="600.6" font-size="13.5" fill="#f4f4f4" font-weight="400" text-anchor="start" textLength="52.6" lengthAdjust="spacingAndGlyphs" >0,3356</text>
<text x="1247.6" y="600.6" font-size="13.5" fill="#f4f4f4" font-weight="400" text-anchor="start" textLength="52.6" lengthAdjust="spacingAndGlyphs" >0,2584</text>
<text x="1344.6" y="600.6" font-size="13.5" fill="#f4f4f4" font-weight="400" text-anchor="start" textLength="52.6" lengthAdjust="spacingAndGlyphs" >0,2556</text>
<text x="1449" y="600.6" font-size="13.5" fill="#f4f4f4" font-weight="400" text-anchor="start" textLength="52.6" lengthAdjust="spacingAndGlyphs" >0,5090</text>
<text x="1531" y="600.6" font-size="13.5" fill="#f4f4f4" font-weight="400" text-anchor="start" textLength="52.6" lengthAdjust="spacingAndGlyphs" >0,2044</text>
<text x="313" y="622.35" font-size="13.7" fill="#f4f4f4" font-weight="700" text-anchor="start" textLength="67.3" lengthAdjust="spacingAndGlyphs" >y: CIE31</text>
<text x="455.5" y="622.35" font-size="13.5" fill="#f4f4f4" font-weight="400" text-anchor="start" textLength="52.6" lengthAdjust="spacingAndGlyphs" >0,3164</text>
<text x="537.6" y="622.35" font-size="13.5" fill="#f4f4f4" font-weight="400" text-anchor="start" textLength="52.6" lengthAdjust="spacingAndGlyphs" >0,3164</text>
<text x="620.5" y="622.35" font-size="13.5" fill="#f4f4f4" font-weight="400" text-anchor="start" textLength="52.6" lengthAdjust="spacingAndGlyphs" >0,3179</text>
<text x="702.6" y="622.35" font-size="13.5" fill="#f4f4f4" font-weight="400" text-anchor="start" textLength="52.6" lengthAdjust="spacingAndGlyphs" >0,3173</text>
<text x="785.5" y="622.35" font-size="13.5" fill="#f4f4f4" font-weight="400" text-anchor="start" textLength="52.6" lengthAdjust="spacingAndGlyphs" >0,3168</text>
<text x="868" y="622.35" font-size="13.5" fill="#f4f4f4" font-weight="400" text-anchor="start" textLength="52.6" lengthAdjust="spacingAndGlyphs" >0,2686</text>
<text x="940.5" y="622.35" font-size="13.5" fill="#f4f4f4" font-weight="400" text-anchor="start" textLength="52.6" lengthAdjust="spacingAndGlyphs" >0,3615</text>
<text x="1020.3" y="622.35" font-size="13.5" fill="#f4f4f4" font-weight="400" text-anchor="start" textLength="52.6" lengthAdjust="spacingAndGlyphs" >0,3486</text>
<text x="1102.2" y="622.35" font-size="13.5" fill="#f4f4f4" font-weight="400" text-anchor="start" textLength="52.6" lengthAdjust="spacingAndGlyphs" >0,2490</text>
<text x="1174.7" y="622.35" font-size="13.5" fill="#f4f4f4" font-weight="400" text-anchor="start" textLength="52.6" lengthAdjust="spacingAndGlyphs" >0,4285</text>
<text x="1247.6" y="622.35" font-size="13.5" fill="#f4f4f4" font-weight="400" text-anchor="start" textLength="52.6" lengthAdjust="spacingAndGlyphs" >0,2385</text>
<text x="1344.6" y="622.35" font-size="13.5" fill="#f4f4f4" font-weight="400" text-anchor="start" textLength="52.6" lengthAdjust="spacingAndGlyphs" >0,3470</text>
<text x="1449" y="622.35" font-size="13.5" fill="#f4f4f4" font-weight="400" text-anchor="start" textLength="52.6" lengthAdjust="spacingAndGlyphs" >0,4133</text>
<text x="1531" y="622.35" font-size="13.5" fill="#f4f4f4" font-weight="400" text-anchor="start" textLength="52.6" lengthAdjust="spacingAndGlyphs" >0,1714</text>
<text x="313" y="644.1" font-size="13.7" fill="#f4f4f4" font-weight="700" text-anchor="start" textLength="10" lengthAdjust="spacingAndGlyphs" >Y</text>
<text x="455.5" y="644.1" font-size="13.5" fill="#f4f4f4" font-weight="400" text-anchor="start" textLength="72.0" lengthAdjust="spacingAndGlyphs" >433,8585</text>
<text x="537.6" y="644.1" font-size="13.5" fill="#f4f4f4" font-weight="400" text-anchor="start" textLength="72.0" lengthAdjust="spacingAndGlyphs" >348,4208</text>
<text x="620.5" y="644.1" font-size="13.5" fill="#f4f4f4" font-weight="400" text-anchor="start" textLength="72.0" lengthAdjust="spacingAndGlyphs" >286,6927</text>
<text x="702.6" y="644.1" font-size="13.5" fill="#f4f4f4" font-weight="400" text-anchor="start" textLength="72.0" lengthAdjust="spacingAndGlyphs" >222,9064</text>
<text x="785.5" y="644.1" font-size="13.5" fill="#f4f4f4" font-weight="400" text-anchor="start" textLength="72.0" lengthAdjust="spacingAndGlyphs" >154,6922</text>
<text x="868" y="644.1" font-size="13.5" fill="#f4f4f4" font-weight="400" text-anchor="start" textLength="52.6" lengthAdjust="spacingAndGlyphs" >0,4486</text>
<text x="940.5" y="644.1" font-size="13.5" fill="#f4f4f4" font-weight="400" text-anchor="start" textLength="62.3" lengthAdjust="spacingAndGlyphs" >44,2859</text>
<text x="1020.3" y="644.1" font-size="13.5" fill="#f4f4f4" font-weight="400" text-anchor="start" textLength="72.0" lengthAdjust="spacingAndGlyphs" >157,0966</text>
<text x="1102.2" y="644.1" font-size="13.5" fill="#f4f4f4" font-weight="400" text-anchor="start" textLength="62.3" lengthAdjust="spacingAndGlyphs" >84,4252</text>
<text x="1174.7" y="644.1" font-size="13.5" fill="#f4f4f4" font-weight="400" text-anchor="start" textLength="62.3" lengthAdjust="spacingAndGlyphs" >57,8539</text>
<text x="1247.6" y="644.1" font-size="13.5" fill="#f4f4f4" font-weight="400" text-anchor="start" textLength="72.0" lengthAdjust="spacingAndGlyphs" >106,3727</text>
<text x="1344.6" y="644.1" font-size="13.5" fill="#f4f4f4" font-weight="400" text-anchor="start" textLength="72.0" lengthAdjust="spacingAndGlyphs" >189,1848</text>
<text x="1449" y="644.1" font-size="13.5" fill="#f4f4f4" font-weight="400" text-anchor="start" textLength="72.0" lengthAdjust="spacingAndGlyphs" >124,4645</text>
<text x="1531" y="644.1" font-size="13.5" fill="#f4f4f4" font-weight="400" text-anchor="start" textLength="62.3" lengthAdjust="spacingAndGlyphs" >53,2841</text>
<text x="313" y="665.85" font-size="13.7" fill="#f4f4f4" font-weight="700" text-anchor="start" textLength="120.5" lengthAdjust="spacingAndGlyphs" >Target x:CIE31</text>
<text x="455.5" y="665.85" font-size="13.5" fill="#f4f4f4" font-weight="400" text-anchor="start" textLength="52.6" lengthAdjust="spacingAndGlyphs" >0,3127</text>
<text x="537.6" y="665.85" font-size="13.5" fill="#f4f4f4" font-weight="400" text-anchor="start" textLength="52.6" lengthAdjust="spacingAndGlyphs" >0,3127</text>
<text x="620.5" y="665.85" font-size="13.5" fill="#f4f4f4" font-weight="400" text-anchor="start" textLength="52.6" lengthAdjust="spacingAndGlyphs" >0,3127</text>
<text x="702.6" y="665.85" font-size="13.5" fill="#f4f4f4" font-weight="400" text-anchor="start" textLength="52.6" lengthAdjust="spacingAndGlyphs" >0,3127</text>
<text x="785.5" y="665.85" font-size="13.5" fill="#f4f4f4" font-weight="400" text-anchor="start" textLength="52.6" lengthAdjust="spacingAndGlyphs" >0,3127</text>
<text x="868" y="665.85" font-size="13.5" fill="#f4f4f4" font-weight="400" text-anchor="start" textLength="52.6" lengthAdjust="spacingAndGlyphs" >0,3127</text>
<text x="940.5" y="665.85" font-size="13.5" fill="#f4f4f4" font-weight="400" text-anchor="start" textLength="52.6" lengthAdjust="spacingAndGlyphs" >0,4003</text>
<text x="1020.3" y="665.85" font-size="13.5" fill="#f4f4f4" font-weight="400" text-anchor="start" textLength="52.6" lengthAdjust="spacingAndGlyphs" >0,3795</text>
<text x="1102.2" y="665.85" font-size="13.5" fill="#f4f4f4" font-weight="400" text-anchor="start" textLength="52.6" lengthAdjust="spacingAndGlyphs" >0,2496</text>
<text x="1174.7" y="665.85" font-size="13.5" fill="#f4f4f4" font-weight="400" text-anchor="start" textLength="52.6" lengthAdjust="spacingAndGlyphs" >0,3395</text>
<text x="1247.6" y="665.85" font-size="13.5" fill="#f4f4f4" font-weight="400" text-anchor="start" textLength="52.6" lengthAdjust="spacingAndGlyphs" >0,2681</text>
<text x="1344.6" y="665.85" font-size="13.5" fill="#f4f4f4" font-weight="400" text-anchor="start" textLength="52.6" lengthAdjust="spacingAndGlyphs" >0,2626</text>
<text x="1449" y="665.85" font-size="13.5" fill="#f4f4f4" font-weight="400" text-anchor="start" textLength="52.6" lengthAdjust="spacingAndGlyphs" >0,5122</text>
<text x="1531" y="665.85" font-size="13.5" fill="#f4f4f4" font-weight="400" text-anchor="start" textLength="52.6" lengthAdjust="spacingAndGlyphs" >0,2114</text>
<text x="313" y="687.6" font-size="13.7" fill="#f4f4f4" font-weight="700" text-anchor="start" textLength="120.5" lengthAdjust="spacingAndGlyphs" >Target y:CIE31</text>
<text x="455.5" y="687.6" font-size="13.5" fill="#f4f4f4" font-weight="400" text-anchor="start" textLength="52.6" lengthAdjust="spacingAndGlyphs" >0,3290</text>
<text x="537.6" y="687.6" font-size="13.5" fill="#f4f4f4" font-weight="400" text-anchor="start" textLength="52.6" lengthAdjust="spacingAndGlyphs" >0,3290</text>
<text x="620.5" y="687.6" font-size="13.5" fill="#f4f4f4" font-weight="400" text-anchor="start" textLength="52.6" lengthAdjust="spacingAndGlyphs" >0,3290</text>
<text x="702.6" y="687.6" font-size="13.5" fill="#f4f4f4" font-weight="400" text-anchor="start" textLength="52.6" lengthAdjust="spacingAndGlyphs" >0,3290</text>
<text x="785.5" y="687.6" font-size="13.5" fill="#f4f4f4" font-weight="400" text-anchor="start" textLength="52.6" lengthAdjust="spacingAndGlyphs" >0,3290</text>
<text x="868" y="687.6" font-size="13.5" fill="#f4f4f4" font-weight="400" text-anchor="start" textLength="52.6" lengthAdjust="spacingAndGlyphs" >0,3290</text>
<text x="940.5" y="687.6" font-size="13.5" fill="#f4f4f4" font-weight="400" text-anchor="start" textLength="52.6" lengthAdjust="spacingAndGlyphs" >0,3642</text>
<text x="1020.3" y="687.6" font-size="13.5" fill="#f4f4f4" font-weight="400" text-anchor="start" textLength="52.6" lengthAdjust="spacingAndGlyphs" >0,3562</text>
<text x="1102.2" y="687.6" font-size="13.5" fill="#f4f4f4" font-weight="400" text-anchor="start" textLength="52.6" lengthAdjust="spacingAndGlyphs" >0,2656</text>
<text x="1174.7" y="687.6" font-size="13.5" fill="#f4f4f4" font-weight="400" text-anchor="start" textLength="52.6" lengthAdjust="spacingAndGlyphs" >0,4271</text>
<text x="1247.6" y="687.6" font-size="13.5" fill="#f4f4f4" font-weight="400" text-anchor="start" textLength="52.6" lengthAdjust="spacingAndGlyphs" >0,2525</text>
<text x="1344.6" y="687.6" font-size="13.5" fill="#f4f4f4" font-weight="400" text-anchor="start" textLength="52.6" lengthAdjust="spacingAndGlyphs" >0,3616</text>
<text x="1449" y="687.6" font-size="13.5" fill="#f4f4f4" font-weight="400" text-anchor="start" textLength="52.6" lengthAdjust="spacingAndGlyphs" >0,4063</text>
<text x="1531" y="687.6" font-size="13.5" fill="#f4f4f4" font-weight="400" text-anchor="start" textLength="52.6" lengthAdjust="spacingAndGlyphs" >0,1945</text>
<text x="313" y="709.35" font-size="13.7" fill="#f4f4f4" font-weight="700" text-anchor="start" textLength="70" lengthAdjust="spacingAndGlyphs" >Target Y</text>
<text x="455.5" y="709.35" font-size="13.5" fill="#f4f4f4" font-weight="400" text-anchor="start" textLength="72.0" lengthAdjust="spacingAndGlyphs" >433,8585</text>
<text x="537.6" y="709.35" font-size="13.5" fill="#f4f4f4" font-weight="400" text-anchor="start" textLength="72.0" lengthAdjust="spacingAndGlyphs" >343,3113</text>
<text x="620.5" y="709.35" font-size="13.5" fill="#f4f4f4" font-weight="400" text-anchor="start" textLength="72.0" lengthAdjust="spacingAndGlyphs" >276,6268</text>
<text x="702.6" y="709.35" font-size="13.5" fill="#f4f4f4" font-weight="400" text-anchor="start" textLength="72.0" lengthAdjust="spacingAndGlyphs" >213,0336</text>
<text x="785.5" y="709.35" font-size="13.5" fill="#f4f4f4" font-weight="400" text-anchor="start" textLength="72.0" lengthAdjust="spacingAndGlyphs" >148,3425</text>
<text x="868" y="709.35" font-size="13.5" fill="#f4f4f4" font-weight="400" text-anchor="start" textLength="52.6" lengthAdjust="spacingAndGlyphs" >0,0000</text>
<text x="940.5" y="709.35" font-size="13.5" fill="#f4f4f4" font-weight="400" text-anchor="start" textLength="62.3" lengthAdjust="spacingAndGlyphs" >43,7039</text>
<text x="1020.3" y="709.35" font-size="13.5" fill="#f4f4f4" font-weight="400" text-anchor="start" textLength="72.0" lengthAdjust="spacingAndGlyphs" >151,3956</text>
<text x="1102.2" y="709.35" font-size="13.5" fill="#f4f4f4" font-weight="400" text-anchor="start" textLength="62.3" lengthAdjust="spacingAndGlyphs" >81,1246</text>
<text x="1174.7" y="709.35" font-size="13.5" fill="#f4f4f4" font-weight="400" text-anchor="start" textLength="62.3" lengthAdjust="spacingAndGlyphs" >56,5424</text>
<text x="1247.6" y="709.35" font-size="13.5" fill="#f4f4f4" font-weight="400" text-anchor="start" textLength="72.0" lengthAdjust="spacingAndGlyphs" >101,1692</text>
<text x="1344.6" y="709.35" font-size="13.5" fill="#f4f4f4" font-weight="400" text-anchor="start" textLength="72.0" lengthAdjust="spacingAndGlyphs" >181,6696</text>
<text x="1449" y="709.35" font-size="13.5" fill="#f4f4f4" font-weight="400" text-anchor="start" textLength="72.0" lengthAdjust="spacingAndGlyphs" >122,9894</text>
<text x="1531" y="709.35" font-size="13.5" fill="#f4f4f4" font-weight="400" text-anchor="start" textLength="62.3" lengthAdjust="spacingAndGlyphs" >50,9411</text>
<text x="313" y="731.1" font-size="13.7" fill="#f4f4f4" font-weight="700" text-anchor="start" textLength="68.7" lengthAdjust="spacingAndGlyphs" >ΔE 2000</text>
<text x="455.5" y="731.1" font-size="13.5" fill="#f4f4f4" font-weight="400" text-anchor="start" textLength="52.6" lengthAdjust="spacingAndGlyphs" >6,0709</text>
<text x="537.6" y="731.1" font-size="13.5" fill="#f4f4f4" font-weight="400" text-anchor="start" textLength="52.6" lengthAdjust="spacingAndGlyphs" >5,6840</text>
<text x="620.5" y="731.1" font-size="13.5" fill="#f4f4f4" font-weight="400" text-anchor="start" textLength="52.6" lengthAdjust="spacingAndGlyphs" >4,8834</text>
<text x="702.6" y="731.1" font-size="13.5" fill="#f4f4f4" font-weight="400" text-anchor="start" textLength="52.6" lengthAdjust="spacingAndGlyphs" >4,7920</text>
<text x="785.5" y="731.1" font-size="13.5" fill="#f4f4f4" font-weight="400" text-anchor="start" textLength="52.6" lengthAdjust="spacingAndGlyphs" >4,4554</text>
<text x="868" y="731.1" font-size="13.5" fill="#f4f4f4" font-weight="400" text-anchor="start" textLength="52.6" lengthAdjust="spacingAndGlyphs" >1,1066</text>
<text x="940.5" y="731.1" font-size="13.5" fill="#f4f4f4" font-weight="400" text-anchor="start" textLength="52.6" lengthAdjust="spacingAndGlyphs" >0,6415</text>
<text x="1020.3" y="731.1" font-size="13.5" fill="#f4f4f4" font-weight="400" text-anchor="start" textLength="52.6" lengthAdjust="spacingAndGlyphs" >2,5177</text>
<text x="1102.2" y="731.1" font-size="13.5" fill="#f4f4f4" font-weight="400" text-anchor="start" textLength="52.6" lengthAdjust="spacingAndGlyphs" >2,5174</text>
<text x="1174.7" y="731.1" font-size="13.5" fill="#f4f4f4" font-weight="400" text-anchor="start" textLength="52.6" lengthAdjust="spacingAndGlyphs" >0,9581</text>
<text x="1247.6" y="731.1" font-size="13.5" fill="#f4f4f4" font-weight="400" text-anchor="start" textLength="52.6" lengthAdjust="spacingAndGlyphs" >2,9625</text>
<text x="1344.6" y="731.1" font-size="13.5" fill="#f4f4f4" font-weight="400" text-anchor="start" textLength="52.6" lengthAdjust="spacingAndGlyphs" >3,4442</text>
<text x="1449" y="731.1" font-size="13.5" fill="#f4f4f4" font-weight="400" text-anchor="start" textLength="52.6" lengthAdjust="spacingAndGlyphs" >2,0298</text>
<text x="1531" y="731.1" font-size="13.5" fill="#f4f4f4" font-weight="400" text-anchor="start" textLength="52.6" lengthAdjust="spacingAndGlyphs" >2,0412</text>
<text x="313" y="752.85" font-size="13.7" fill="#f4f4f4" font-weight="700" text-anchor="start" textLength="54.6" lengthAdjust="spacingAndGlyphs" >ΔE ITP</text>
<text x="455.5" y="752.85" font-size="13.5" fill="#f4f4f4" font-weight="400" text-anchor="start" textLength="52.6" lengthAdjust="spacingAndGlyphs" >6,9942</text>
<text x="537.6" y="752.85" font-size="13.5" fill="#f4f4f4" font-weight="400" text-anchor="start" textLength="52.6" lengthAdjust="spacingAndGlyphs" >6,6918</text>
<text x="620.5" y="752.85" font-size="13.5" fill="#f4f4f4" font-weight="400" text-anchor="start" textLength="52.6" lengthAdjust="spacingAndGlyphs" >6,7634</text>
<text x="702.6" y="752.85" font-size="13.5" fill="#f4f4f4" font-weight="400" text-anchor="start" textLength="52.6" lengthAdjust="spacingAndGlyphs" >7,3753</text>
<text x="785.5" y="752.85" font-size="13.5" fill="#f4f4f4" font-weight="400" text-anchor="start" textLength="52.6" lengthAdjust="spacingAndGlyphs" >7,2210</text>
<text x="868" y="752.85" font-size="13.5" fill="#f4f4f4" font-weight="400" text-anchor="start" textLength="62.3" lengthAdjust="spacingAndGlyphs" >82,6448</text>
<text x="940.5" y="752.85" font-size="13.5" fill="#f4f4f4" font-weight="400" text-anchor="start" textLength="52.6" lengthAdjust="spacingAndGlyphs" >2,5297</text>
<text x="1020.3" y="752.85" font-size="13.5" fill="#f4f4f4" font-weight="400" text-anchor="start" textLength="52.6" lengthAdjust="spacingAndGlyphs" >7,5076</text>
<text x="1102.2" y="752.85" font-size="13.5" fill="#f4f4f4" font-weight="400" text-anchor="start" textLength="52.6" lengthAdjust="spacingAndGlyphs" >7,9478</text>
<text x="1174.7" y="752.85" font-size="13.5" fill="#f4f4f4" font-weight="400" text-anchor="start" textLength="52.6" lengthAdjust="spacingAndGlyphs" >2,6708</text>
<text x="1247.6" y="752.85" font-size="13.5" fill="#f4f4f4" font-weight="400" text-anchor="start" textLength="52.6" lengthAdjust="spacingAndGlyphs" >7,9402</text>
<text x="1344.6" y="752.85" font-size="13.5" fill="#f4f4f4" font-weight="400" text-anchor="start" textLength="52.6" lengthAdjust="spacingAndGlyphs" >6,5749</text>
<text x="1449" y="752.85" font-size="13.5" fill="#f4f4f4" font-weight="400" text-anchor="start" textLength="52.6" lengthAdjust="spacingAndGlyphs" >5,4601</text>
<text x="1531" y="752.85" font-size="13.5" fill="#f4f4f4" font-weight="400" text-anchor="start" textLength="52.6" lengthAdjust="spacingAndGlyphs" >9,1133</text>
<rect x="300" y="759" width="1260" height="14" fill="#555"/>
<rect x="300.5" y="760" width="15" height="12" rx="2" fill="#6e6e6e"/><path d="M311 762.5 L311 769.5 L305.5 766 Z" fill="#333"/>
<rect x="319.6" y="760.5" width="368.8" height="11.5" rx="5.7" fill="#3e3e3e"/>
<rect x="1543" y="760" width="15" height="12" rx="2" fill="#6e6e6e"/><path d="M1547 762.5 L1547 769.5 L1552.5 766 Z" fill="#333"/>
<defs><linearGradient id="btn" x1="0" y1="0" x2="0" y2="1"><stop offset="0" stop-color="#9a9a9a"/><stop offset="0.5" stop-color="#858585"/><stop offset="1" stop-color="#5c5c5c"/></linearGradient><linearGradient id="btn2" x1="0" y1="0" x2="0" y2="1"><stop offset="0" stop-color="#a8a8a8"/><stop offset="1" stop-color="#6a6a6a"/></linearGradient><linearGradient id="btnd" x1="0" y1="0" x2="0" y2="1"><stop offset="0" stop-color="#3c3c3c"/><stop offset="1" stop-color="#2a2a2a"/></linearGradient><linearGradient id="circ" x1="0" y1="0" x2="0" y2="1"><stop offset="0" stop-color="#808080"/><stop offset="0.55" stop-color="#9c9c9c"/><stop offset="1" stop-color="#bababa"/></linearGradient></defs>
<rect x="0" y="789" width="1240" height="52" fill="#3a3a3a"/>
<rect x="0.5" y="791" width="48.5" height="52" rx="4" fill="url(#btn)"/>
<rect x="4.5" y="796.5" width="39.5" height="23.5" rx="3" fill="#ffffff" stroke="#555" stroke-width="0.8"/>
<text x="8.2" y="835.2" font-size="11.5" fill="#2a2a2a" stroke="#2a2a2a" stroke-width="0.35" textLength="29.8" lengthAdjust="spacingAndGlyphs">White</text>
<rect x="52.4" y="791" width="48.5" height="52" rx="4" fill="url(#btn)"/>
<rect x="56.4" y="796.5" width="39.5" height="23.5" rx="3" fill="#e6e6e6" stroke="#555" stroke-width="0.8"/>
<text x="56.3" y="835.2" font-size="11.5" fill="#2a2a2a" stroke="#2a2a2a" stroke-width="0.35" textLength="37.8" lengthAdjust="spacingAndGlyphs">Gray 80</text>
<rect x="104.2" y="791" width="48.5" height="52" rx="4" fill="url(#btn)"/>
<rect x="108.2" y="796.5" width="39.5" height="23.5" rx="3" fill="#d2d2d2" stroke="#555" stroke-width="0.8"/>
<text x="107.6" y="835.2" font-size="11.5" fill="#2a2a2a" stroke="#2a2a2a" stroke-width="0.35" textLength="38.3" lengthAdjust="spacingAndGlyphs">Gray 65</text>
<rect x="156.1" y="791" width="48.5" height="52" rx="4" fill="url(#btn)"/>
<rect x="160.1" y="796.5" width="39.5" height="23.5" rx="3" fill="#bcbcbc" stroke="#555" stroke-width="0.8"/>
<text x="160.2" y="835.2" font-size="11.5" fill="#2a2a2a" stroke="#2a2a2a" stroke-width="0.35" textLength="37.8" lengthAdjust="spacingAndGlyphs">Gray 50</text>
<rect x="207.9" y="791" width="48.5" height="52" rx="4" fill="url(#btn)"/>
<rect x="211.9" y="796.5" width="39.5" height="23.5" rx="3" fill="#a0a0a0" stroke="#555" stroke-width="0.8"/>
<text x="212.0" y="835.2" font-size="11.5" fill="#2a2a2a" stroke="#2a2a2a" stroke-width="0.35" textLength="37.8" lengthAdjust="spacingAndGlyphs">Gray 35</text>
<rect x="259.8" y="791" width="48.5" height="52" rx="4" fill="url(#btn)"/>
<rect x="263.8" y="796.5" width="39.5" height="23.5" rx="3" fill="#000000" stroke="#555" stroke-width="0.8"/>
<text x="269.5" y="835.2" font-size="11.5" fill="#2a2a2a" stroke="#2a2a2a" stroke-width="0.35" textLength="26.3" lengthAdjust="spacingAndGlyphs">Black</text>
<rect x="311.6" y="791" width="48.5" height="52" rx="4" fill="url(#btn)"/>
<rect x="315.6" y="796.5" width="39.5" height="23.5" rx="3" fill="#735244" stroke="#555" stroke-width="0.8"/>
<text x="312.2" y="835.2" font-size="11.5" fill="#2a2a2a" stroke="#2a2a2a" stroke-width="0.35" textLength="46.1" lengthAdjust="spacingAndGlyphs">Dark Skin</text>
<rect x="363.4" y="791" width="48.5" height="52" rx="4" fill="url(#btn)"/>
<rect x="367.4" y="796.5" width="39.5" height="23.5" rx="3" fill="#c29682" stroke="#555" stroke-width="0.8"/>
<text x="364.0" y="835.2" font-size="11.5" fill="#2a2a2a" stroke="#2a2a2a" stroke-width="0.35" textLength="46.8" lengthAdjust="spacingAndGlyphs">Light Skin</text>
<rect x="415.3" y="791" width="48.5" height="52" rx="4" fill="url(#btn)"/>
<rect x="419.3" y="796.5" width="39.5" height="23.5" rx="3" fill="#627a9d" stroke="#555" stroke-width="0.8"/>
<text x="418.2" y="835.2" font-size="11.5" fill="#2a2a2a" stroke="#2a2a2a" stroke-width="0.35" textLength="41.9" lengthAdjust="spacingAndGlyphs">Blue Sky</text>
<rect x="467.2" y="791" width="48.5" height="52" rx="4" fill="url(#btn)"/>
<rect x="471.2" y="796.5" width="39.5" height="23.5" rx="3" fill="#576c43" stroke="#555" stroke-width="0.8"/>
<text x="473.7" y="835.2" font-size="11.5" fill="#2a2a2a" stroke="#2a2a2a" stroke-width="0.35" textLength="34.9" lengthAdjust="spacingAndGlyphs">Foliage</text>
<rect x="519.0" y="791" width="48.5" height="52" rx="4" fill="url(#btn)"/>
<rect x="523.0" y="795.8" width="40" height="12.2" rx="3" fill="#8580b1" stroke="#555" stroke-width="0.8"/>
<text x="526.7" y="823" font-size="11.5" fill="#2a2a2a" stroke="#2a2a2a" stroke-width="0.35" textLength="21.8" lengthAdjust="spacingAndGlyphs">Blue</text>
<text x="527.1" y="835" font-size="11.5" fill="#2a2a2a" stroke="#2a2a2a" stroke-width="0.35" textLength="32.5" lengthAdjust="spacingAndGlyphs">Flower</text>
<rect x="570.9" y="791" width="48.5" height="52" rx="4" fill="url(#btn)"/>
<rect x="574.9" y="795.8" width="40" height="12.2" rx="3" fill="#67bdaa" stroke="#555" stroke-width="0.8"/>
<text x="580.1" y="823" font-size="11.5" fill="#2a2a2a" stroke="#2a2a2a" stroke-width="0.35" textLength="29.6" lengthAdjust="spacingAndGlyphs">Bluish</text>
<text x="583.4" y="835" font-size="11.5" fill="#2a2a2a" stroke="#2a2a2a" stroke-width="0.35" textLength="25.9" lengthAdjust="spacingAndGlyphs">Green</text>
<rect x="622.7" y="791" width="48.5" height="52" rx="4" fill="url(#btn)"/>
<rect x="626.7" y="796.5" width="39.5" height="23.5" rx="3" fill="#d67e2c" stroke="#555" stroke-width="0.8"/>
<text x="629.0" y="835.2" font-size="11.5" fill="#2a2a2a" stroke="#2a2a2a" stroke-width="0.35" textLength="35.4" lengthAdjust="spacingAndGlyphs">Orange</text>
<rect x="674.6" y="791" width="48.5" height="52" rx="4" fill="url(#btn)"/>
<rect x="678.6" y="795.8" width="40" height="12.2" rx="3" fill="#505ba6" stroke="#555" stroke-width="0.8"/>
<text x="679.6" y="823" font-size="11.5" fill="#2a2a2a" stroke="#2a2a2a" stroke-width="0.35" textLength="39" lengthAdjust="spacingAndGlyphs">Purplish</text>
<text x="679.6" y="835" font-size="11.5" fill="#2a2a2a" stroke="#2a2a2a" stroke-width="0.35" textLength="21.7" lengthAdjust="spacingAndGlyphs">Blue</text>
<rect x="726.4" y="791" width="48.5" height="52" rx="4" fill="url(#btn)"/>
<rect x="730.4" y="795.8" width="40" height="12.2" rx="3" fill="#c15a63" stroke="#555" stroke-width="0.8"/>
<text x="726.0" y="823" font-size="11.5" fill="#2a2a2a" stroke="#2a2a2a" stroke-width="0.35" textLength="49.3" lengthAdjust="spacingAndGlyphs">Moderate</text>
<text x="726.0" y="835" font-size="11.5" fill="#2a2a2a" stroke="#2a2a2a" stroke-width="0.35" textLength="19.3" lengthAdjust="spacingAndGlyphs">Red</text>
<rect x="778.2" y="791" width="48.5" height="52" rx="4" fill="url(#btn)"/>
<rect x="782.2" y="796.5" width="39.5" height="23.5" rx="3" fill="#5e3c6c" stroke="#555" stroke-width="0.8"/>
<text x="786.4" y="835.2" font-size="11.5" fill="#2a2a2a" stroke="#2a2a2a" stroke-width="0.35" textLength="32.9" lengthAdjust="spacingAndGlyphs">Purple</text>
<rect x="830.1" y="791" width="48.5" height="52" rx="4" fill="url(#btn)"/>
<rect x="834.1" y="795.8" width="40" height="12.2" rx="3" fill="#9dbc40" stroke="#555" stroke-width="0.8"/>
<text x="839.0" y="823" font-size="11.5" fill="#2a2a2a" stroke="#2a2a2a" stroke-width="0.35" textLength="32.4" lengthAdjust="spacingAndGlyphs">Yellow</text>
<text x="841.0" y="835" font-size="11.5" fill="#2a2a2a" stroke="#2a2a2a" stroke-width="0.35" textLength="30" lengthAdjust="spacingAndGlyphs">Green</text>
<rect x="882.0" y="791" width="48.5" height="52" rx="4" fill="url(#btn)"/>
<rect x="886.0" y="795.8" width="40" height="12.2" rx="3" fill="#e0a32e" stroke="#555" stroke-width="0.8"/>
<text x="889.0" y="823" font-size="11.5" fill="#2a2a2a" stroke="#2a2a2a" stroke-width="0.35" textLength="35.8" lengthAdjust="spacingAndGlyphs">Orange</text>
<text x="891.0" y="835" font-size="11.5" fill="#2a2a2a" stroke="#2a2a2a" stroke-width="0.35" textLength="32.2" lengthAdjust="spacingAndGlyphs">Yellow</text>
<rect x="933.8" y="791" width="48.5" height="52" rx="4" fill="url(#btn)"/>
<rect x="937.8" y="796.5" width="39.5" height="23.5" rx="3" fill="#383d96" stroke="#555" stroke-width="0.8"/>
<text x="948.7" y="835.2" font-size="11.5" fill="#2a2a2a" stroke="#2a2a2a" stroke-width="0.35" textLength="21.3" lengthAdjust="spacingAndGlyphs">Blue</text>
<rect x="985.6" y="791" width="48.5" height="52" rx="4" fill="url(#btn)"/>
<rect x="989.6" y="796.5" width="39.5" height="23.5" rx="3" fill="#469449" stroke="#555" stroke-width="0.8"/>
<text x="996.7" y="835.2" font-size="11.5" fill="#2a2a2a" stroke="#2a2a2a" stroke-width="0.35" textLength="29.3" lengthAdjust="spacingAndGlyphs">Green</text>
<rect x="1037.5" y="791" width="48.5" height="52" rx="4" fill="url(#btn)"/>
<rect x="1041.5" y="796.5" width="39.5" height="23.5" rx="3" fill="#af363c" stroke="#555" stroke-width="0.8"/>
<text x="1054.3" y="835.2" font-size="11.5" fill="#2a2a2a" stroke="#2a2a2a" stroke-width="0.35" textLength="17.7" lengthAdjust="spacingAndGlyphs">Red</text>
<rect x="1089.4" y="791" width="48.5" height="52" rx="4" fill="url(#btn)"/>
<rect x="1093.4" y="796.5" width="39.5" height="23.5" rx="3" fill="#e7c71f" stroke="#555" stroke-width="0.8"/>
<text x="1100.7" y="835.2" font-size="11.5" fill="#2a2a2a" stroke="#2a2a2a" stroke-width="0.35" textLength="30.8" lengthAdjust="spacingAndGlyphs">Yellow</text>
<rect x="1141.2" y="791" width="48.5" height="52" rx="4" fill="url(#btn)"/>
<rect x="1145.2" y="796.5" width="39.5" height="23.5" rx="3" fill="#bb5695" stroke="#555" stroke-width="0.8"/>
<text x="1145.9" y="835.2" font-size="11.5" fill="#2a2a2a" stroke="#2a2a2a" stroke-width="0.35" textLength="43.1" lengthAdjust="spacingAndGlyphs">Magenta</text>
<rect x="1193.0" y="791" width="48.5" height="52" rx="4" fill="url(#btn)"/>
<rect x="1197.0" y="796.5" width="39.5" height="23.5" rx="3" fill="#0885a1" stroke="#555" stroke-width="0.8"/>
<text x="1207.5" y="835.2" font-size="11.5" fill="#2a2a2a" stroke="#2a2a2a" stroke-width="0.35" textLength="23.4" lengthAdjust="spacingAndGlyphs">Cyan</text>
<rect x="0" y="840" width="1240" height="10" fill="#686868"/>
<rect x="11" y="841" width="616" height="10" rx="4.5" fill="#4a4a4a"/>
<path d="M5 842.5 L5 849.5 L1 846 Z" fill="#bbb"/>
<path d="M1238 842.5 L1238 849.5 L1242 846 Z" fill="#bbb"/>
<rect x="1240" y="789" width="318" height="61" fill="#333"/>
<rect x="1240.5" y="791" width="47.5" height="17.5" rx="3" fill="url(#btn2)"/>
<circle cx="1264" cy="800" r="7.5" fill="url(#circ)"/><path d="M1259.5 802.5 L1268.5 802.5 L1264 797.5 Z" fill="#222"/>
<rect x="1240.5" y="809.5" width="47.5" height="41" rx="3" fill="url(#btn2)"/>
<rect x="1249.5" y="816" width="29" height="29" rx="4" fill="none" stroke="#222" stroke-width="2.5"/>
<rect x="1257" y="823.5" width="14" height="14" fill="#000"/>
<rect x="1289.5" y="791" width="45.3" height="29.5" rx="2" fill="url(#btn2)"/>
<circle cx="1312.2" cy="806" r="10" fill="url(#circ)"/>
<rect x="1308.2" y="802" width="8" height="8" fill="#222"/>
<rect x="1335.8" y="791" width="43.7" height="29.5" rx="2" fill="url(#btn2)"/>
<circle cx="1357.7" cy="806" r="10" fill="url(#circ)"/>
<path d="M1354.7 801 L1362.7 806 L1354.7 811 Z" fill="#222"/>
<rect x="1380.5" y="791" width="44.4" height="29.5" rx="2" fill="url(#btn2)"/>
<circle cx="1402.7" cy="806" r="10" fill="url(#circ)"/>
<path d="M1399.2 801 H1397.2 V811 H1399.2 M1406.2 801 H1408.2 V811 H1406.2" fill="none" stroke="#222" stroke-width="1.8"/><rect x="1400.5" y="805" width="1.6" height="1.8" fill="#222"/><rect x="1403.3" y="805" width="1.6" height="1.8" fill="#222"/>
<rect x="1425.9" y="791" width="43.6" height="29.5" rx="2" fill="url(#btn2)"/>
<circle cx="1447.7" cy="806" r="10" fill="url(#circ)"/>
<path d="M1447.7 806 C1449.7 802.4 1454.7 802.4 1454.7 806 C1454.7 809.6 1449.7 809.6 1447.7 806 C1445.7 802.4 1440.7 802.4 1440.7 806 C1440.7 809.6 1445.7 809.6 1447.7 806 Z" fill="none" stroke="#222" stroke-width="1.7"/>
<rect x="1470.5" y="791" width="44.3" height="29.5" rx="2" fill="url(#btnd)"/>
<circle cx="1492.7" cy="806" r="10" fill="#2c2c2c" stroke="#3c3c3c" stroke-width="1.2"/>
<path d="M1488.1 806.8 A4.6 4.6 0 0 1 1495.9 802.6 M1497.2 805.2 A4.6 4.6 0 0 1 1489.5 809.4" fill="none" stroke="#151515" stroke-width="2"/><path d="M1497.9 800.0 L1497.9 804.8 L1493.5 803.6 Z M1487.5 812.0 L1487.5 807.2 L1491.9 808.4 Z" fill="#151515"/>
<rect x="1515.8" y="791" width="41.7" height="29.5" rx="2" fill="url(#btnd)"/>
<circle cx="1539.2" cy="806" r="10" fill="#2c2c2c" stroke="#3c3c3c" stroke-width="1.2"/>
<rect x="1289.5" y="822" width="135" height="28" rx="3" fill="url(#btn2)"/>
<rect x="1425.5" y="822" width="133" height="28" rx="3" fill="url(#btn2)"/>
<circle cx="1319.5" cy="837" r="10" fill="url(#circ)"/><path d="M1319 832 L1315.5 837 L1319 842 M1323.5 832 L1320 837 L1323.5 842" fill="none" stroke="#222" stroke-width="1.4"/>
<circle cx="1533" cy="837" r="10" fill="url(#circ)"/><path d="M1529 832 L1532.5 837 L1529 842 M1533.5 832 L1537 837 L1533.5 842" fill="none" stroke="#222" stroke-width="1.4"/>
<text x="1346.8" y="845" font-size="22.5" fill="#2e2e2e" font-weight="400" text-anchor="start" textLength="50.6" lengthAdjust="spacingAndGlyphs" stroke="#2e2e2e" stroke-width="0.5">Back</text>
<text x="1453" y="845" font-size="22.5" fill="#2e2e2e" font-weight="400" text-anchor="start" textLength="51.7" lengthAdjust="spacingAndGlyphs" stroke="#2e2e2e" stroke-width="0.5">Next</text>
<rect x="914.1" y="27.1" width="644.3" height="516.8" fill="#333333" stroke="#d98c5e" stroke-width="6.2"/>
<text x="1236" y="47" font-size="12.5" fill="#d8d8d8" font-weight="400" text-anchor="middle" textLength="78.5" lengthAdjust="spacingAndGlyphs" >CIE 1976 u'v'</text>
<rect x="952.5" y="51.5" width="600.5" height="462" fill="#232323" stroke="#a0a0a0" stroke-width="1"/>
<line x1="946" y1="513.5" x2="952.5" y2="513.5" stroke="#c8c8c8" stroke-width="1.6"/>
<text x="945.5" y="519.1" font-size="13.3" fill="#d8d8d8" font-weight="400" text-anchor="end" >0</text>
<line x1="946" y1="475.5" x2="952.5" y2="475.5" stroke="#c8c8c8" stroke-width="1.6"/>
<text x="945.5" y="481.1" font-size="13.3" fill="#d8d8d8" font-weight="400" text-anchor="end" >0,05</text>
<line x1="946" y1="437.5" x2="952.5" y2="437.5" stroke="#c8c8c8" stroke-width="1.6"/>
<text x="945.5" y="443.1" font-size="13.3" fill="#d8d8d8" font-weight="400" text-anchor="end" >0,1</text>
<line x1="946" y1="399.5" x2="952.5" y2="399.5" stroke="#c8c8c8" stroke-width="1.6"/>
<text x="945.5" y="405.1" font-size="13.3" fill="#d8d8d8" font-weight="400" text-anchor="end" >0,15</text>
<line x1="946" y1="360.5" x2="952.5" y2="360.5" stroke="#c8c8c8" stroke-width="1.6"/>
<text x="945.5" y="366.1" font-size="13.3" fill="#d8d8d8" font-weight="400" text-anchor="end" >0,2</text>
<line x1="946" y1="322.5" x2="952.5" y2="322.5" stroke="#c8c8c8" stroke-width="1.6"/>
<text x="945.5" y="328.1" font-size="13.3" fill="#d8d8d8" font-weight="400" text-anchor="end" >0,25</text>
<line x1="946" y1="283.5" x2="952.5" y2="283.5" stroke="#c8c8c8" stroke-width="1.6"/>
<text x="945.5" y="289.1" font-size="13.3" fill="#d8d8d8" font-weight="400" text-anchor="end" >0,3</text>
<line x1="946" y1="245.5" x2="952.5" y2="245.5" stroke="#c8c8c8" stroke-width="1.6"/>
<text x="945.5" y="251.1" font-size="13.3" fill="#d8d8d8" font-weight="400" text-anchor="end" >0,35</text>
<line x1="946" y1="206.5" x2="952.5" y2="206.5" stroke="#c8c8c8" stroke-width="1.6"/>
<text x="945.5" y="212.1" font-size="13.3" fill="#d8d8d8" font-weight="400" text-anchor="end" >0,4</text>
<line x1="946" y1="168.5" x2="952.5" y2="168.5" stroke="#c8c8c8" stroke-width="1.6"/>
<text x="945.5" y="174.1" font-size="13.3" fill="#d8d8d8" font-weight="400" text-anchor="end" >0,45</text>
<line x1="946" y1="129.5" x2="952.5" y2="129.5" stroke="#c8c8c8" stroke-width="1.6"/>
<text x="945.5" y="135.1" font-size="13.3" fill="#d8d8d8" font-weight="400" text-anchor="end" >0,5</text>
<line x1="946" y1="91.5" x2="952.5" y2="91.5" stroke="#c8c8c8" stroke-width="1.6"/>
<text x="945.5" y="97.1" font-size="13.3" fill="#d8d8d8" font-weight="400" text-anchor="end" >0,55</text>
<line x1="952.5" y1="513.4" x2="952.5" y2="519.5" stroke="#c0c0c0" stroke-width="1.3"/>
<text x="952.5" y="534" font-size="13.3" fill="#d8d8d8" font-weight="400" text-anchor="middle" >0</text>
<line x1="1002.5" y1="513.4" x2="1002.5" y2="519.5" stroke="#c0c0c0" stroke-width="1.3"/>
<text x="1002.5" y="534" font-size="13.3" fill="#d8d8d8" font-weight="400" text-anchor="middle" >0,05</text>
<line x1="1052.5" y1="513.4" x2="1052.5" y2="519.5" stroke="#c0c0c0" stroke-width="1.3"/>
<text x="1052.5" y="534" font-size="13.3" fill="#d8d8d8" font-weight="400" text-anchor="middle" >0,1</text>
<line x1="1102.5" y1="513.4" x2="1102.5" y2="519.5" stroke="#c0c0c0" stroke-width="1.3"/>
<text x="1102.5" y="534" font-size="13.3" fill="#d8d8d8" font-weight="400" text-anchor="middle" >0,15</text>
<line x1="1152.5" y1="513.4" x2="1152.5" y2="519.5" stroke="#c0c0c0" stroke-width="1.3"/>
<text x="1152.5" y="534" font-size="13.3" fill="#d8d8d8" font-weight="400" text-anchor="middle" >0,2</text>
<line x1="1202.5" y1="513.4" x2="1202.5" y2="519.5" stroke="#c0c0c0" stroke-width="1.3"/>
<text x="1202.5" y="534" font-size="13.3" fill="#d8d8d8" font-weight="400" text-anchor="middle" >0,25</text>
<line x1="1252.5" y1="513.4" x2="1252.5" y2="519.5" stroke="#c0c0c0" stroke-width="1.3"/>
<text x="1252.5" y="534" font-size="13.3" fill="#d8d8d8" font-weight="400" text-anchor="middle" >0,3</text>
<line x1="1302.5" y1="513.4" x2="1302.5" y2="519.5" stroke="#c0c0c0" stroke-width="1.3"/>
<text x="1302.5" y="534" font-size="13.3" fill="#d8d8d8" font-weight="400" text-anchor="middle" >0,35</text>
<line x1="1352.5" y1="513.4" x2="1352.5" y2="519.5" stroke="#c0c0c0" stroke-width="1.3"/>
<text x="1352.5" y="534" font-size="13.3" fill="#d8d8d8" font-weight="400" text-anchor="middle" >0,4</text>
<line x1="1402.5" y1="513.4" x2="1402.5" y2="519.5" stroke="#c0c0c0" stroke-width="1.3"/>
<text x="1402.5" y="534" font-size="13.3" fill="#d8d8d8" font-weight="400" text-anchor="middle" >0,45</text>
<line x1="1452.5" y1="513.4" x2="1452.5" y2="519.5" stroke="#c0c0c0" stroke-width="1.3"/>
<text x="1452.5" y="534" font-size="13.3" fill="#d8d8d8" font-weight="400" text-anchor="middle" >0,5</text>
<line x1="1501.5" y1="513.4" x2="1501.5" y2="519.5" stroke="#c0c0c0" stroke-width="1.3"/>
<text x="1501.5" y="534" font-size="13.3" fill="#d8d8d8" font-weight="400" text-anchor="middle" >0,55</text>
</svg>
<div style="position:absolute;left:953px;top:52px;width:600px;height:461.5px;overflow:hidden">
<div style="position:absolute;left:0;top:0;width:600px;height:461.5px;background:radial-gradient(circle at 304.3px 208.5px, rgba(215,0,215,0.75) 0px, rgba(190,0,190,0.4) 60px, rgba(160,0,160,0) 150px),conic-gradient(from 0deg at 197.2px 102.2px, #a08800 0deg, #b87000 20deg, #c06000 36deg, #b83800 55deg, #a82000 68deg, #a00000 81deg, #9a0018 100deg, #900050 122deg, #6a0090 150deg, #2000a0 172deg, #0808b8 185deg, #0010a8 200deg, #0040a0 228deg, #008a80 252deg, #009040 280deg, #009a10 300deg, #009a00 315deg, #3a8a00 340deg, #a08800 360deg);clip-path:polygon(256.2px 448.7px, 256.1px 448.7px, 256.0px 448.8px, 255.8px 448.8px, 255.7px 448.9px, 255.5px 449.0px, 255.4px 449.1px, 255.2px 449.1px, 255.1px 449.2px, 254.9px 449.2px, 254.8px 449.2px, 254.7px 449.2px, 254.6px 449.3px, 254.4px 449.3px, 254.3px 449.2px, 254.1px 449.2px, 253.9px 449.2px, 253.7px 449.1px, 253.4px 449.1px, 253.1px 449.0px, 252.8px 448.9px, 252.5px 448.8px, 252.2px 448.7px, 251.9px 448.6px, 251.6px 448.4px, 251.3px 448.3px, 251.0px 448.1px, 250.7px 447.9px, 250.4px 447.7px, 250.0px 447.5px, 249.7px 447.2px, 249.4px 447.0px, 249.0px 446.7px, 248.6px 446.4px, 248.2px 446.2px, 247.8px 445.9px, 247.4px 445.5px, 247.0px 445.2px, 246.5px 444.8px, 246.0px 444.5px, 245.5px 444.0px, 244.9px 443.6px, 244.4px 443.2px, 243.8px 442.7px, 243.1px 442.2px, 242.5px 441.7px, 241.8px 441.1px, 241.1px 440.5px, 240.4px 440.0px, 239.7px 439.4px, 239.0px 438.7px, 238.2px 438.1px, 237.4px 437.4px, 236.6px 436.7px, 235.8px 436.0px, 235.0px 435.3px, 234.1px 434.5px, 233.2px 433.8px, 232.2px 433.0px, 231.3px 432.2px, 230.3px 431.4px, 229.3px 430.6px, 228.2px 429.7px, 227.2px 428.8px, 226.0px 427.9px, 224.8px 426.9px, 223.6px 425.9px, 222.3px 424.9px, 221.0px 423.8px, 219.7px 422.7px, 218.3px 421.6px, 216.9px 420.4px, 215.5px 419.3px, 214.0px 418.0px, 212.5px 416.8px, 211.0px 415.6px, 209.4px 414.3px, 207.8px 413.0px, 206.2px 411.6px, 204.5px 410.2px, 202.7px 408.6px, 200.9px 407.1px, 199.1px 405.5px, 197.2px 403.8px, 195.3px 402.1px, 193.3px 400.4px, 191.3px 398.5px, 189.2px 396.6px, 187.1px 394.6px, 185.0px 392.5px, 182.8px 390.4px, 180.6px 388.3px, 178.3px 386.1px, 176.0px 383.7px, 173.6px 381.2px, 171.0px 378.5px, 168.4px 375.5px, 165.6px 372.4px, 162.7px 369.1px, 159.7px 365.6px, 156.6px 361.9px, 153.4px 358.1px, 150.2px 354.1px, 146.9px 349.9px, 143.5px 345.6px, 140.1px 341.1px, 136.5px 336.4px, 132.9px 331.5px, 129.3px 326.4px, 125.5px 321.2px, 121.8px 315.8px, 118.0px 310.3px, 114.1px 304.6px, 110.3px 298.8px, 106.3px 292.7px, 102.3px 286.4px, 98.3px 280.0px, 94.2px 273.5px, 90.2px 266.9px, 86.2px 260.3px, 82.3px 253.7px, 78.3px 247.0px, 74.4px 240.1px, 70.4px 233.2px, 66.4px 226.2px, 62.6px 219.2px, 58.8px 212.3px, 55.1px 205.4px, 51.6px 198.6px, 48.2px 191.8px, 45.0px 185.0px, 41.8px 178.2px, 38.7px 171.4px, 35.8px 164.8px, 32.9px 158.2px, 30.2px 151.8px, 27.6px 145.6px, 25.2px 139.6px, 22.9px 133.6px, 20.6px 127.8px, 18.5px 122.1px, 16.6px 116.6px, 14.7px 111.2px, 13.0px 106.0px, 11.4px 101.0px, 9.9px 96.3px, 8.6px 91.7px, 7.4px 87.3px, 6.3px 83.1px, 5.3px 79.1px, 4.4px 75.2px, 3.7px 71.5px, 3.0px 67.9px, 2.4px 64.5px, 1.9px 61.2px, 1.5px 58.2px, 1.2px 55.3px, 1.0px 52.5px, 0.9px 49.8px, 0.9px 47.3px, 0.9px 44.8px, 1.1px 42.4px, 1.3px 40.2px, 1.6px 38.1px, 1.9px 36.0px, 2.4px 34.1px, 2.9px 32.3px, 3.5px 30.6px, 4.1px 28.9px, 4.9px 27.4px, 5.7px 25.9px, 6.5px 24.5px, 7.5px 23.2px, 8.5px 22.0px, 9.5px 20.9px, 10.6px 19.8px, 11.8px 18.9px, 13.0px 18.0px, 14.2px 17.2px, 15.5px 16.4px, 16.9px 15.8px, 18.3px 15.2px, 19.7px 14.7px, 21.1px 14.2px, 22.6px 13.7px, 24.1px 13.3px, 25.7px 13.0px, 27.2px 12.7px, 28.8px 12.5px, 30.5px 12.3px, 32.1px 12.1px, 33.8px 12.0px, 35.5px 11.8px, 37.2px 11.7px, 38.9px 11.6px, 40.7px 11.5px, 42.4px 11.5px, 44.2px 11.4px, 46.0px 11.4px, 47.8px 11.4px, 49.5px 11.4px, 51.3px 11.3px, 53.1px 11.3px, 54.8px 11.4px, 56.6px 11.4px, 58.4px 11.4px, 60.2px 11.4px, 62.0px 11.5px, 63.8px 11.5px, 65.6px 11.6px, 67.5px 11.7px, 69.3px 11.7px, 71.1px 11.8px, 73.0px 11.9px, 74.9px 12.0px, 76.8px 12.1px, 78.7px 12.2px, 80.6px 12.4px, 82.6px 12.5px, 84.6px 12.6px, 86.5px 12.8px, 88.6px 12.9px, 90.6px 13.1px, 92.6px 13.2px, 94.7px 13.4px, 96.8px 13.6px, 98.9px 13.7px, 101.1px 13.9px, 103.2px 14.1px, 105.4px 14.3px, 107.6px 14.5px, 109.9px 14.7px, 112.1px 15.0px, 114.4px 15.2px, 116.8px 15.4px, 119.1px 15.6px, 121.5px 15.9px, 123.9px 16.1px, 126.3px 16.4px, 128.8px 16.6px, 131.3px 16.9px, 133.8px 17.1px, 136.4px 17.4px, 139.0px 17.7px, 141.6px 18.0px, 144.3px 18.3px, 147.0px 18.6px, 149.7px 18.9px, 152.5px 19.2px, 155.3px 19.5px, 158.2px 19.8px, 161.1px 20.1px, 164.0px 20.4px, 166.9px 20.8px, 169.9px 21.1px, 172.9px 21.4px, 176.0px 21.8px, 179.1px 22.1px, 182.3px 22.5px, 185.4px 22.8px, 188.7px 23.2px, 191.9px 23.6px, 195.3px 23.9px, 198.6px 24.3px, 202.0px 24.7px, 205.4px 25.1px, 208.9px 25.5px, 212.4px 25.9px, 216.0px 26.3px, 219.5px 26.7px, 223.2px 27.1px, 226.8px 27.5px, 230.6px 28.0px, 234.3px 28.4px, 238.1px 28.8px, 241.9px 29.3px, 245.8px 29.7px, 249.7px 30.2px, 253.7px 30.6px, 257.7px 31.1px, 261.7px 31.5px, 265.8px 32.0px, 269.9px 32.5px, 274.0px 33.0px, 278.2px 33.4px, 282.5px 33.9px, 286.7px 34.4px, 291.0px 34.9px, 295.3px 35.4px, 299.7px 35.9px, 304.0px 36.4px, 308.5px 36.9px, 312.9px 37.4px, 317.4px 37.9px, 321.9px 38.4px, 326.4px 38.9px, 330.9px 39.5px, 335.4px 40.0px, 339.9px 40.5px, 344.5px 41.0px, 349.1px 41.6px, 353.7px 42.1px, 358.3px 42.6px, 362.9px 43.2px, 367.4px 43.7px, 371.9px 44.2px, 376.3px 44.7px, 380.8px 45.2px, 385.2px 45.7px, 389.6px 46.2px, 394.0px 46.7px, 398.4px 47.2px, 402.8px 47.7px, 407.1px 48.2px, 411.5px 48.7px, 415.9px 49.2px, 420.3px 49.7px, 424.6px 50.2px, 428.9px 50.7px, 433.1px 51.2px, 437.2px 51.7px, 441.3px 52.1px, 445.3px 52.6px, 449.3px 53.1px, 453.3px 53.5px, 457.1px 53.9px, 461.0px 54.4px, 464.7px 54.8px, 468.4px 55.2px, 472.1px 55.6px, 475.7px 56.1px, 479.2px 56.5px, 482.7px 56.9px, 486.1px 57.3px, 489.5px 57.7px, 492.8px 58.0px, 496.0px 58.4px, 499.1px 58.8px, 501.9px 59.1px, 504.6px 59.4px, 507.2px 59.7px, 509.9px 60.0px, 512.8px 60.3px, 516.0px 60.7px, 519.5px 61.1px, 523.5px 61.6px, 527.9px 62.1px, 532.6px 62.6px, 537.4px 63.2px, 542.3px 63.7px, 547.1px 64.3px, 551.6px 64.8px, 555.7px 65.3px, 559.5px 65.7px, 563.0px 66.1px, 566.3px 66.5px, 569.5px 66.8px, 572.6px 67.2px, 575.8px 67.6px, 578.9px 67.9px, 582.2px 68.3px, 585.8px 68.7px, 589.5px 69.1px, 593.3px 69.6px, 597.0px 70.0px, 600.7px 70.4px, 604.2px 70.8px, 607.3px 71.2px, 610.1px 71.5px, 612.5px 71.8px, 614.6px 72.0px, 616.4px 72.2px, 618.1px 72.4px, 619.5px 72.6px, 620.7px 72.7px, 621.7px 72.8px, 622.6px 72.9px)"></div>
<div style="position:absolute;left:0;top:0;width:600px;height:461.5px;background:linear-gradient(to bottom, #009a00 0px, #009a08 60px, #009a50 98px, #00a090 126px, #0080a0 153px, #0060a0 180px, #0048a0 210px, #0030a0 250px, #0018a0 300px, #0004a4 368px, #0000a8 461.5px);clip-path:polygon(183.0px 390.6px, 182.8px 390.4px, 180.6px 388.3px, 178.3px 386.1px, 176.0px 383.7px, 173.6px 381.2px, 171.0px 378.5px, 168.4px 375.5px, 165.6px 372.4px, 162.7px 369.1px, 159.7px 365.6px, 156.6px 361.9px, 153.4px 358.1px, 150.2px 354.1px, 146.9px 349.9px, 143.5px 345.6px, 140.1px 341.1px, 136.5px 336.4px, 132.9px 331.5px, 129.3px 326.4px, 125.5px 321.2px, 121.8px 315.8px, 118.0px 310.3px, 114.1px 304.6px, 110.3px 298.8px, 106.3px 292.7px, 102.3px 286.4px, 98.3px 280.0px, 94.2px 273.5px, 90.2px 266.9px, 86.2px 260.3px, 82.3px 253.7px, 78.3px 247.0px, 74.4px 240.1px, 70.4px 233.2px, 66.4px 226.2px, 62.6px 219.2px, 58.8px 212.3px, 55.1px 205.4px, 51.6px 198.6px, 48.2px 191.8px, 45.0px 185.0px, 41.8px 178.2px, 38.7px 171.4px, 35.8px 164.8px, 32.9px 158.2px, 30.2px 151.8px, 27.6px 145.6px, 25.2px 139.6px, 22.9px 133.6px, 20.6px 127.8px, 18.5px 122.1px, 16.6px 116.6px, 14.7px 111.2px, 13.0px 106.0px, 11.4px 101.0px, 9.9px 96.3px, 8.6px 91.7px, 7.4px 87.3px, 6.3px 83.1px, 5.3px 79.1px, 4.4px 75.2px, 3.7px 71.5px, 3.0px 67.9px, 2.4px 64.5px, 1.9px 61.2px, 1.5px 58.2px, 1.2px 55.3px, 1.0px 52.5px, 0.9px 49.8px, 0.9px 47.3px, 0.9px 44.8px, 1.1px 42.4px, 1.3px 40.2px, 1.6px 38.1px, 1.9px 36.0px, 2.4px 34.1px, 2.9px 32.3px, 3.5px 30.6px, 4.1px 28.9px, 4.9px 27.4px, 5.7px 25.9px, 6.5px 24.5px, 7.5px 23.2px, 8.5px 22.0px, 9.5px 20.9px, 10.6px 19.8px, 11.8px 18.9px, 13.0px 18.0px, 14.2px 17.2px, 15.5px 16.4px, 16.9px 15.8px, 18.3px 15.2px, 19.7px 14.7px, 21.1px 14.2px, 22.6px 13.7px, 24.1px 13.3px, 25.7px 13.0px, 27.2px 12.7px, 28.8px 12.5px, 30.5px 12.3px, 32.1px 12.1px, 33.8px 12.0px, 35.5px 11.8px, 37.2px 11.7px, 38.9px 11.6px, 40.7px 11.5px, 42.4px 11.5px, 44.2px 11.4px, 46.0px 11.4px, 47.8px 11.4px, 49.5px 11.4px, 51.3px 11.3px, 53.1px 11.3px, 54.8px 11.4px, 56.6px 11.4px, 58.4px 11.4px, 60.2px 11.4px, 62.0px 11.5px, 63.8px 11.5px, 65.6px 11.6px, 67.5px 11.7px, 69.3px 11.7px, 71.1px 11.8px, 73.0px 11.9px, 74.9px 12.0px, 76.8px 12.1px, 78.7px 12.2px, 80.6px 12.4px, 82.6px 12.5px, 84.6px 12.6px, 86.5px 12.8px, 88.6px 12.9px, 90.6px 13.1px, 92.6px 13.2px, 94.7px 13.4px, 96.8px 13.6px, 98.9px 13.7px, 101.1px 13.9px, 103.2px 14.1px, 105.4px 14.3px, 107.6px 14.5px, 109.9px 14.7px, 112.1px 15.0px, 114.4px 15.2px, 116.8px 15.4px, 119.1px 15.6px, 121.5px 15.9px, 122.2px 15.9px)"></div>
<div style="position:absolute;left:0;top:0;width:600px;height:461.5px;background:conic-gradient(from 0deg at 197.2px 102.2px, #ffff00 5deg, #ffa000 30deg, #ff6000 50deg, #ff0000 81deg, #ff0080 108deg, #ff00ff 135deg, #8000ff 165deg, #0000ff 185deg, #0080ff 225deg, #00ffff 261deg, #00ff80 292deg, #00ff00 315deg, #80ff00 340deg, #ffff00 365deg);clip-path:polygon(450.0px 60.3px, 124.4px 30.0px, 174.8px 340.3px)"></div>
</div>
<svg width="600" height="461.5" style="position:absolute;left:953px;top:52px"><defs><clipPath id="tric"><polygon points="450.0,60.3 124.4,30.0 174.8,340.3"/></clipPath><linearGradient id="wg0" gradientUnits="userSpaceOnUse" x1="203.3" y1="37.3" x2="197.2" y2="102.2"><stop offset="0" stop-color="#000"/><stop offset="0.35" stop-color="#444"/><stop offset="0.7" stop-color="#b0b0b0"/><stop offset="1" stop-color="#fff"/></linearGradient><mask id="wm0" maskUnits="userSpaceOnUse" x="0" y="0" width="600" height="461.5"><rect x="0" y="0" width="600" height="461.5" fill="url(#wg0)"/></mask><linearGradient id="wg1" gradientUnits="userSpaceOnUse" x1="137.7" y1="111.9" x2="197.2" y2="102.2"><stop offset="0" stop-color="#000"/><stop offset="0.35" stop-color="#444"/><stop offset="0.7" stop-color="#b0b0b0"/><stop offset="1" stop-color="#fff"/></linearGradient><mask id="wm1" maskUnits="userSpaceOnUse" x="0" y="0" width="600" height="461.5"><rect x="0" y="0" width="600" height="461.5" fill="url(#wg1)"/></mask><linearGradient id="wg2" gradientUnits="userSpaceOnUse" x1="304.8" y1="208.0" x2="197.2" y2="102.2"><stop offset="0" stop-color="#000"/><stop offset="0.4" stop-color="#2a2a2a"/><stop offset="0.7" stop-color="#787878"/><stop offset="0.87" stop-color="#c0c0c0"/><stop offset="1" stop-color="#fff"/></linearGradient><mask id="wm2" maskUnits="userSpaceOnUse" x="0" y="0" width="600" height="461.5"><rect x="0" y="0" width="600" height="461.5" fill="url(#wg2)"/></mask></defs><g clip-path="url(#tric)"><g mask="url(#wm0)"><g mask="url(#wm1)"><rect x="0" y="0" width="600" height="461.5" fill="#fff" mask="url(#wm2)"/></g></g></g></svg>
<svg width="1558" height="850" viewBox="0 0 1558 850" style="position:absolute;left:0;top:0;font-family:'Liberation Sans',sans-serif">
<defs><clipPath id="pc"><rect x="953" y="52" width="600" height="461.5"/></clipPath><linearGradient id="ins" x1="0" y1="0" x2="1" y2="1"><stop offset="0" stop-color="#ff8c22"/><stop offset="1" stop-color="#ff4424"/></linearGradient></defs>
<g clip-path="url(#pc)">
<rect x="1069.5" y="73.5" width="13" height="13" fill="none" stroke="#f2f2f2" stroke-width="1.6"/>
<rect x="1092.8" y="96.7" width="13" height="13" fill="none" stroke="#f2f2f2" stroke-width="1.6"/>
<rect x="1130.0" y="88.2" width="13" height="13" fill="none" stroke="#f2f2f2" stroke-width="1.6"/>
<rect x="1148.5" y="81.1" width="13" height="13" fill="none" stroke="#f2f2f2" stroke-width="1.6"/>
<rect x="1174.3" y="85.3" width="13" height="13" fill="none" stroke="#f2f2f2" stroke-width="1.6"/>
<rect x="1203.9" y="91.6" width="13" height="13" fill="none" stroke="#f2f2f2" stroke-width="1.6"/>
<rect x="1244.0" y="96.7" width="13" height="13" fill="none" stroke="#f2f2f2" stroke-width="1.6"/>
<rect x="1127.9" y="109.4" width="13" height="13" fill="none" stroke="#f2f2f2" stroke-width="1.6"/>
<rect x="1395.2" y="103.9" width="13" height="13" fill="none" stroke="#f2f2f2" stroke-width="1.6"/>
<rect x="1320.0" y="123.3" width="13" height="13" fill="none" stroke="#f2f2f2" stroke-width="1.6"/>
<rect x="1262.2" y="134.7" width="13" height="13" fill="none" stroke="#f2f2f2" stroke-width="1.6"/>
<rect x="1232.2" y="178.2" width="13" height="13" fill="none" stroke="#f2f2f2" stroke-width="1.6"/>
<rect x="1173.1" y="204.8" width="13" height="13" fill="none" stroke="#f2f2f2" stroke-width="1.6"/>
<rect x="1250.3" y="252.1" width="13" height="13" fill="none" stroke="#f2f2f2" stroke-width="1.6"/>
<rect x="1099.2" y="138.1" width="13" height="13" fill="none" stroke="#f2f2f2" stroke-width="1.6"/>
<rect x="1084.4" y="156.2" width="13" height="13" fill="none" stroke="#f2f2f2" stroke-width="1.6"/>
<rect x="1089.0" y="185.4" width="13" height="13" fill="none" stroke="#f2f2f2" stroke-width="1.6"/>
<rect x="1121.5" y="183.3" width="13" height="13" fill="none" stroke="#f2f2f2" stroke-width="1.6"/>
<rect x="1140.5" y="187.9" width="13" height="13" fill="none" stroke="#f2f2f2" stroke-width="1.6"/>
<rect x="1123.2" y="233.1" width="13" height="13" fill="none" stroke="#f2f2f2" stroke-width="1.6"/>
<rect x="1122.8" y="280.3" width="13" height="13" fill="none" stroke="#f2f2f2" stroke-width="1.6"/>
<rect x="1121.1" y="385.4" width="13" height="13" fill="none" stroke="#f2f2f2" stroke-width="1.6"/>
<rect x="1220.6" y="101.1" width="13" height="13" fill="none" stroke="#f2f2f2" stroke-width="1.6"/>
<rect x="1228.0" y="108.5" width="13" height="13" fill="none" stroke="#f2f2f2" stroke-width="1.6"/>
<rect x="1197.2" y="108.9" width="13" height="13" fill="none" stroke="#f2f2f2" stroke-width="1.6"/>
<rect x="1216.9" y="112.2" width="13" height="13" fill="none" stroke="#f2f2f2" stroke-width="1.6"/>
<rect x="1178.2" y="118.0" width="13" height="13" fill="none" stroke="#f2f2f2" stroke-width="1.6"/>
<rect x="1221.0" y="117.2" width="13" height="13" fill="none" stroke="#f2f2f2" stroke-width="1.6"/>
<rect x="1199.5" y="120.0" width="13" height="13" fill="none" stroke="#f2f2f2" stroke-width="1.6"/>
<rect x="1188.1" y="125.0" width="13" height="13" fill="none" stroke="#f2f2f2" stroke-width="1.6"/>
<rect x="1179.0" y="131.2" width="13" height="13" fill="none" stroke="#f2f2f2" stroke-width="1.6"/>
<rect x="1208.5" y="105.5" width="13" height="13" fill="none" stroke="#f2f2f2" stroke-width="1.6"/>
<rect x="1143" y="146" width="13" height="13" fill="none" stroke="#000" stroke-width="2.5"/>
<circle cx="1075.7" cy="77.4" r="4.6" fill="#30e030" stroke="#111" stroke-width="1"/>
<circle cx="1096.4" cy="101.1" r="4.6" fill="#4a7a4a" stroke="#111" stroke-width="1"/>
<circle cx="1132.7" cy="92.6" r="4.6" fill="#a0b050" stroke="#111" stroke-width="1"/>
<circle cx="1151.7" cy="85.5" r="4.6" fill="#f0e020" stroke="#111" stroke-width="1"/>
<circle cx="1174.5" cy="88.8" r="4.6" fill="#e0b040" stroke="#111" stroke-width="1"/>
<circle cx="1131.4" cy="115.4" r="4.6" fill="#506040" stroke="#111" stroke-width="1"/>
<circle cx="1397" cy="110.4" r="4.6" fill="#e01010" stroke="#111" stroke-width="1"/>
<circle cx="1325.7" cy="131.9" r="4.6" fill="#b03030" stroke="#111" stroke-width="1"/>
<circle cx="1262.3" cy="146.3" r="4.6" fill="#c05060" stroke="#111" stroke-width="1"/>
<circle cx="1232.4" cy="196.1" r="4.6" fill="#b05080" stroke="#111" stroke-width="1"/>
<circle cx="1178.3" cy="225.2" r="4.6" fill="#604070" stroke="#111" stroke-width="1"/>
<circle cx="1246.3" cy="274.2" r="4.6" fill="#e030e0" stroke="#111" stroke-width="1"/>
<circle cx="1105.7" cy="151.3" r="4.6" fill="#70b0a0" stroke="#111" stroke-width="1"/>
<circle cx="1091.3" cy="169.1" r="4.6" fill="#30e0f0" stroke="#111" stroke-width="1"/>
<circle cx="1146.6" cy="159.4" r="4.6" fill="#a0a0a0" stroke="#111" stroke-width="1"/>
<circle cx="1140.7" cy="186.4" r="4.6" fill="#000000" stroke="#111" stroke-width="1"/>
<circle cx="1096.4" cy="201.6" r="4.6" fill="#208090" stroke="#111" stroke-width="1"/>
<circle cx="1126.4" cy="200.3" r="4.6" fill="#607090" stroke="#111" stroke-width="1"/>
<circle cx="1145.4" cy="203.3" r="4.6" fill="#8088a0" stroke="#111" stroke-width="1"/>
<circle cx="1128.5" cy="253.1" r="4.6" fill="#4050a0" stroke="#111" stroke-width="1"/>
<circle cx="1130.2" cy="306.2" r="4.6" fill="#404880" stroke="#111" stroke-width="1"/>
<circle cx="1130.2" cy="399.5" r="4.6" fill="#1020e0" stroke="#111" stroke-width="1"/>
<circle cx="1204.5" cy="95.2" r="4.6" fill="#e0a848" stroke="#111" stroke-width="1"/>
<circle cx="1246.1" cy="100.2" r="4.6" fill="#906038" stroke="#111" stroke-width="1"/>
<circle cx="1247.3" cy="101.6" r="4.6" fill="#a06838" stroke="#111" stroke-width="1"/>
<circle cx="1215.4" cy="109.2" r="4.6" fill="#8a5a40" stroke="#111" stroke-width="1"/>
<circle cx="1227.5" cy="108" r="4.6" fill="#80553a" stroke="#111" stroke-width="1"/>
<circle cx="1234.5" cy="113.4" r="4.6" fill="#7a5038" stroke="#111" stroke-width="1"/>
<circle cx="1197.5" cy="117.1" r="4.6" fill="#d09070" stroke="#111" stroke-width="1"/>
<circle cx="1211.5" cy="118" r="4.6" fill="#d89a78" stroke="#111" stroke-width="1"/>
<circle cx="1217.7" cy="118.7" r="4.6" fill="#d09078" stroke="#111" stroke-width="1"/>
<circle cx="1202.4" cy="122" r="4.6" fill="#c08060" stroke="#111" stroke-width="1"/>
<circle cx="1193.8" cy="131.5" r="4.6" fill="#805040" stroke="#111" stroke-width="1"/>
<circle cx="1197.5" cy="123.2" r="4.6" fill="#d09878" stroke="#111" stroke-width="1"/>
<circle cx="1206.5" cy="126.3" r="4.6" fill="#d89070" stroke="#111" stroke-width="1"/>
<circle cx="1218.5" cy="124.5" r="4.6" fill="#f0a080" stroke="#111" stroke-width="1"/>
<circle cx="1191.7" cy="127" r="4.6" fill="#c88868" stroke="#111" stroke-width="1"/>
<circle cx="1178.3" cy="128.2" r="4.6" fill="#f0c0a0" stroke="#111" stroke-width="1"/>
<circle cx="1180.2" cy="138.5" r="4.6" fill="#e8b898" stroke="#111" stroke-width="1"/>
<circle cx="1177.7" cy="137.3" r="4.6" fill="#f0c0a0" stroke="#111" stroke-width="1"/>
</g>
<rect x="1360" y="352" width="187" height="122" fill="url(#ins)" stroke="#7a7a7a" stroke-width="2"/>
<svg x="1361" y="353" width="185" height="120" overflow="hidden">
<rect x="24.0" y="34.9" width="13.5" height="13.5" fill="none" stroke="#f4ece4" stroke-width="1.5"/>
<rect x="3.2" y="64.9" width="13.5" height="13.5" fill="none" stroke="#f4ece4" stroke-width="1.5"/>
<rect x="9.5" y="72.9" width="13.5" height="13.5" fill="none" stroke="#f4ece4" stroke-width="1.5"/>
<rect x="17.0" y="84.1" width="13.5" height="13.5" fill="none" stroke="#f4ece4" stroke-width="1.5"/>
<rect x="85.2" y="52.8" width="13.5" height="13.5" fill="none" stroke="#f4ece4" stroke-width="1.5"/>
<rect x="103.0" y="65.4" width="13.5" height="13.5" fill="none" stroke="#f4ece4" stroke-width="1.5"/>
<rect x="89.0" y="88.2" width="13.5" height="13.5" fill="none" stroke="#f4ece4" stroke-width="1.5"/>
<rect x="122.2" y="15.9" width="13.5" height="13.5" fill="none" stroke="#f4ece4" stroke-width="1.5"/>
<rect x="168.0" y="17.2" width="13.5" height="13.5" fill="none" stroke="#f4ece4" stroke-width="1.5"/>
<rect x="167.5" y="51.4" width="13.5" height="13.5" fill="none" stroke="#f4ece4" stroke-width="1.5"/>
<circle cx="125.40000000000009" cy="10.699999999999989" r="4.5" fill="#8a5030" stroke="#222" stroke-width="1"/>
<circle cx="50.90000000000009" cy="59.5" r="4.5" fill="#d8905e" stroke="#222" stroke-width="1"/>
<circle cx="68.40000000000009" cy="73.39999999999998" r="4.5" fill="#d08858" stroke="#222" stroke-width="1"/>
<circle cx="43.200000000000045" cy="101.39999999999998" r="4.5" fill="#f0a080" stroke="#222" stroke-width="1"/>
<circle cx="186" cy="12" r="4.5" fill="#8a5030" stroke="#222" stroke-width="1"/>
<circle cx="186" cy="54.39999999999998" r="4.5" fill="#8a5030" stroke="#222" stroke-width="1"/>
</svg>
<rect x="1313" y="483.5" width="236" height="25.5" fill="#2a2a2a"/>
<text x="1313.5" y="503" font-size="18.5" fill="#ececec" font-weight="400" text-anchor="start" textLength="209" lengthAdjust="spacingAndGlyphs" >RGB Triplet: 217, 140, 94</text>
</svg></body></html>
